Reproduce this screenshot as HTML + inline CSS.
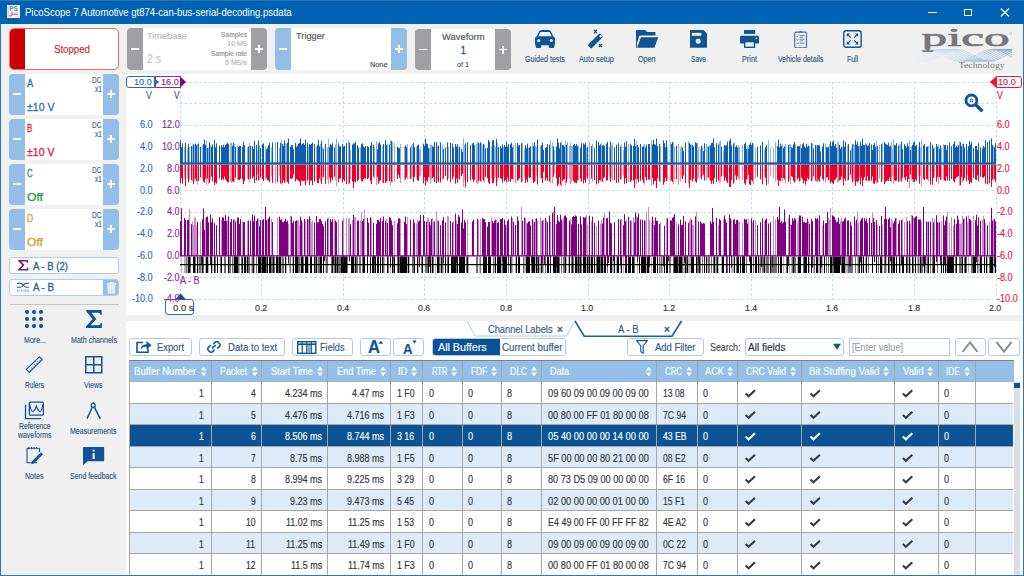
<!DOCTYPE html>
<html><head><meta charset="utf-8"><style>
html,body{margin:0;padding:0;}
body{width:1024px;height:576px;overflow:hidden;position:relative;background:#f0f0f0;font-family:"Liberation Sans",sans-serif;}
.a{position:absolute;box-sizing:border-box;}
.t{position:absolute;white-space:nowrap;line-height:1;-webkit-text-stroke:0.15px currentColor;}
svg{position:absolute;left:0;top:0;}
</style></head><body>
<div class="a" style="left:0px;top:0px;width:1024px;height:24px;background:#0063b1"></div>
<div class="a" style="left:0px;top:0px;width:1024px;height:1px;background:#2a74bd"></div>
<svg style="left:7px;top:5px" width="13" height="13" viewBox="0 0 13 13">
<rect x="0" y="0" width="13" height="13" fill="#f4f4f4"/>
<rect x="0.8" y="0.5" width="0.8" height="12" fill="#bbb"/>
<text x="2.2" y="6.2" font-family="Liberation Sans" font-size="6.6" font-weight="bold" fill="#4d8fd0">PS</text>
<path d="M2.5 10.5 Q4 12 5 10 L5 6.8 M5 9.2 L11 9.2" stroke="#e43a5a" stroke-width="1" fill="none"/>
</svg>
<div class="t" style="left:24.50px;top:6.79px;font-size:10.53px;color:#ffffff;font-weight:normal;transform:scaleX(0.9086);transform-origin:0 0;-webkit-text-stroke:0;">PicoScope 7 Automotive gt874-can-bus-serial-decoding.psdata</div>
<div class="a" style="left:928px;top:12px;width:9px;height:1px;background:#fff"></div>
<div class="a" style="left:964px;top:8.5px;width:8px;height:7.5px;border:1px solid #fff"></div>
<svg style="left:1000px;top:8px" width="10" height="9" viewBox="0 0 10 9"><path d="M0.8 0.5 L9 8.5 M9 0.5 L0.8 8.5" stroke="#fff" stroke-width="1.1"/></svg>
<div class="a" style="left:9px;top:28px;width:110px;height:42px;background:#fff;border:1px solid #e07070;border-radius:5px;overflow:hidden"><div class="a" style="left:-1px;top:-1px;width:16px;height:42px;background:#cc0000"></div></div>
<div class="t" style="left:54.00px;top:43.59px;font-size:11.114999999999998px;color:#c8262c;font-weight:normal;transform:scaleX(0.8693);transform-origin:0 0;">Stopped</div>
<div class="a" style="left:127px;top:28px;width:140px;height:42px;background:#fff;border-radius:4px;overflow:hidden"><div class="a" style="left:0;top:0;width:16px;height:100%;background:#a0a0a3"></div><div class="a" style="right:0;top:0;width:16px;height:100%;background:#a0a0a3"></div></div>
<div class="a" style="left:131.0px;top:48.4px;width:8.0px;height:1.3000000000000043px;background:#fff"></div>
<div class="a" style="left:255.0px;top:48.4px;width:8.0px;height:1.3000000000000043px;background:#fff"></div>
<div class="a" style="left:258.4px;top:45.0px;width:1.2000000000000455px;height:8.0px;background:#fff"></div>
<div class="t" style="left:147.40px;top:32.37px;font-size:8.892px;color:#b9b9b9;font-weight:normal;transform:scaleX(1.0332);transform-origin:0 0;">Timebase</div>
<div class="t" style="left:147.40px;top:52.70px;font-size:12.051px;color:#c4c4c4;font-weight:normal;transform:scaleX(0.8709);transform-origin:0 0;">2 s</div>
<div class="t" style="left:221.30px;top:31.36px;font-size:7.254px;color:#8f8f8f;font-weight:normal;transform:scaleX(0.9212);transform-origin:0 0;">Samples</div>
<div class="t" style="left:227.30px;top:40.76px;font-size:6.903px;color:#b5b5b5;font-weight:normal;">10 MS</div>
<div class="t" style="left:211.30px;top:50.36px;font-size:7.254px;color:#8f8f8f;font-weight:normal;transform:scaleX(0.9204);transform-origin:0 0;">Sample rate</div>
<div class="t" style="left:225.30px;top:59.86px;font-size:6.903px;color:#b5b5b5;font-weight:normal;transform:scaleX(1.0241);transform-origin:0 0;">5 MS/s</div>
<div class="a" style="left:275px;top:28px;width:132px;height:42px;background:#fff;border-radius:4px;overflow:hidden"><div class="a" style="left:0;top:0;width:16px;height:100%;background:#92bee8"></div><div class="a" style="right:0;top:0;width:16px;height:100%;background:#92bee8"></div></div>
<div class="a" style="left:279.0px;top:48.4px;width:8.0px;height:1.3000000000000043px;background:#fff"></div>
<div class="a" style="left:395.0px;top:48.4px;width:8.0px;height:1.3000000000000043px;background:#fff"></div>
<div class="a" style="left:398.4px;top:45.0px;width:1.2000000000000455px;height:8.0px;background:#fff"></div>
<div class="t" style="left:295.80px;top:31.77px;font-size:8.892px;color:#555555;font-weight:normal;transform:scaleX(1.0418);transform-origin:0 0;">Trigger</div>
<div class="t" style="left:369.50px;top:60.77px;font-size:8.073px;color:#3d4a5c;font-weight:normal;transform:scaleX(0.9067);transform-origin:0 0;">None</div>
<div class="a" style="left:415px;top:29px;width:96px;height:41px;background:#fff;border-radius:4px;overflow:hidden"><div class="a" style="left:0;top:0;width:16px;height:100%;background:#a0a0a3"></div><div class="a" style="right:0;top:0;width:16px;height:100%;background:#a0a0a3"></div></div>
<div class="a" style="left:419.0px;top:48.9px;width:8.0px;height:1.3000000000000043px;background:#fff"></div>
<div class="a" style="left:499.0px;top:48.9px;width:8.0px;height:1.3000000000000043px;background:#fff"></div>
<div class="a" style="left:502.4px;top:45.5px;width:1.2000000000000455px;height:8.0px;background:#fff"></div>
<div class="t" style="left:442.05px;top:32.97px;font-size:8.774999999999999px;color:#505050;font-weight:normal;transform:scaleX(1.0717);transform-origin:0 0;">Waveform</div>
<div class="t" style="left:461.00px;top:45.49px;font-size:11.232px;color:#2a5a90;font-weight:normal;transform:scaleX(0.7364);transform-origin:0 0;-webkit-text-stroke:0.5px currentColor;">1</div>
<div class="t" style="left:457.30px;top:60.76px;font-size:7.3709999999999996px;color:#2a5a90;font-weight:normal;transform:scaleX(0.9760);transform-origin:0 0;">of 1</div>
<svg style="left:535px;top:29.5px" width="20" height="18" viewBox="0 0 20 18" fill="#0f5496">
<path d="M4 1.6 Q4.7 0 6.5 0 H13.5 Q15.3 0 16 1.6 L18.2 6.2 Q20 7 20 9 V13.8 Q20 15.3 18.5 15.3 H1.5 Q0 15.3 0 13.8 V9 Q0 7 1.8 6.2 Z"/>
<path d="M5 2.6 Q5.3 2.1 6.2 2.1 H13.8 Q14.7 2.1 15 2.6 L16.6 6.2 H3.4 Z" fill="#f0f0f0"/>
<circle cx="3.7" cy="10.5" r="1.6" fill="#f0f0f0"/><circle cx="16.3" cy="10.5" r="1.6" fill="#f0f0f0"/>
<rect x="0.6" y="13" width="5.6" height="5" rx="1.6"/><rect x="13.8" y="13" width="5.6" height="5" rx="1.6"/>
</svg>
<div class="t" style="left:525.00px;top:54.77px;font-size:8.892px;color:#2f5a86;font-weight:normal;transform:scaleX(0.8012);transform-origin:0 0;">Guided tests</div>
<svg style="left:586px;top:28px" width="20" height="21" viewBox="0 0 20 21" fill="#0f5496">
<path d="M2.6 16.2 L12.6 6.2 Q13.6 5.2 14.6 6.2 L16.2 7.8 Q17.2 8.8 16.2 9.8 L6.2 19.8 Q5.2 20.8 4.2 19.8 L2.6 18.2 Q1.6 17.2 2.6 16.2 Z"/>
<rect x="13.6" y="7.2" width="2.2" height="2.2" transform="rotate(45 14.7 8.3)" fill="#f0f0f0"/>
<path d="M8 2 L11 5 M11 2 L8 5 M13 16 L16 19 M16 16 L13 19" stroke="#0f5496" stroke-width="1.1" fill="none"/>
</svg>
<div class="t" style="left:578.50px;top:54.77px;font-size:8.892px;color:#2f5a86;font-weight:normal;transform:scaleX(0.8232);transform-origin:0 0;">Auto setup</div>
<svg style="left:636px;top:29.75px" width="22.5" height="18" viewBox="0 0 22.5 18" fill="#0f5496">
<path d="M0 0.8 Q0 0 0.8 0 H9.3 L11 2 H18.7 Q19.5 2 19.5 2.8 V5.4 H4.6 Q3.4 5.4 3 6.6 L0.9 13.6 V17.75 H0 Z"/>
<path d="M4.9 7.2 H22.3 L18.4 17.75 H1.2 Z"/>
</svg>
<div class="t" style="left:638.45px;top:54.77px;font-size:8.892px;color:#2f5a86;font-weight:normal;transform:scaleX(0.8045);transform-origin:0 0;">Open</div>
<svg style="left:689.8px;top:29.75px" width="17.2" height="17.8" viewBox="0 0 17.2 17.8" fill="#0f5496">
<path d="M0 0 H13.6 L17.2 3.6 V17.8 H0 Z"/>
<rect x="1.9" y="2.85" width="9.5" height="2.9" fill="#f0f0f0"/>
<circle cx="8.2" cy="11.3" r="2.5" fill="#f0f0f0"/>
</svg>
<div class="t" style="left:691.00px;top:54.77px;font-size:8.892px;color:#2f5a86;font-weight:normal;transform:scaleX(0.7401);transform-origin:0 0;">Save</div>
<svg style="left:740px;top:29.75px" width="19" height="18" viewBox="0 0 19 18" fill="#0f5496">
<rect x="4" y="0" width="11.2" height="3.9"/>
<path d="M1.2 5.8 H17.8 Q19 5.8 19 7 V12.4 Q19 13.6 17.8 13.6 H1.2 Q0 13.6 0 12.4 V7 Q0 5.8 1.2 5.8 Z"/>
<rect x="4" y="11" width="11.2" height="7" rx="0.8"/>
<rect x="5.4" y="12.3" width="8.4" height="4.3" fill="#f0f0f0"/>
<circle cx="16.4" cy="8.3" r="0.9" fill="#f0f0f0"/>
</svg>
<div class="t" style="left:742.00px;top:54.77px;font-size:8.892px;color:#2f5a86;font-weight:normal;transform:scaleX(0.8204);transform-origin:0 0;">Print</div>
<svg style="left:794px;top:29.5px" width="14" height="18.5" viewBox="0 0 14 18.5">
<rect x="0.7" y="2.2" width="11.8" height="15.6" rx="1.2" fill="none" stroke="#3f78b0" stroke-width="1.2"/>
<path d="M4 2.8 V1.6 H5.6 Q6.5 0 7.4 1.6 H9 V2.8 Z" fill="#3f78b0"/>
<path d="M2.6 6 L3.4 6.9 L4.6 5.2 M2.6 9.6 L3.4 10.5 L4.6 8.8 M2.6 13.2 L3.4 14.1 L4.6 12.4" stroke="#3f78b0" stroke-width="0.8" fill="none"/>
<path d="M5.6 5.6 H10.6 M5.6 7.2 H9 M5.6 9.2 H10.6 M5.6 10.8 H9 M5.6 13.2 H10.6" stroke="#3f78b0" stroke-width="0.8"/>
</svg>
<div class="t" style="left:777.95px;top:54.77px;font-size:8.892px;color:#2f5a86;font-weight:normal;transform:scaleX(0.8004);transform-origin:0 0;">Vehicle details</div>
<svg style="left:842.7px;top:29.75px" width="19" height="18" viewBox="0 0 19 18">
<rect x="0.75" y="0.75" width="17.4" height="16.5" rx="2.2" fill="none" stroke="#0f5496" stroke-width="1.4"/>
<g stroke="#0f5496" stroke-width="1.2" fill="#0f5496">

</g>
<g fill="#0f5496">
<path d="M3.7 3.6 H7 L3.7 6.9 Z"/><path d="M15.2 3.6 V6.9 L11.9 3.6 Z"/>
<path d="M3.7 14.4 V11.1 L7 14.4 Z"/><path d="M15.2 14.4 H11.9 L15.2 11.1 Z"/>
</g>
<path d="M4.5 4.4 L7.7 7.6 M14.4 4.4 L11.2 7.6 M4.5 13.6 L7.7 10.4 M14.4 13.6 L11.2 10.4" stroke="#0f5496" stroke-width="1.3"/>
</svg>
<div class="t" style="left:846.50px;top:54.77px;font-size:8.892px;color:#2f5a86;font-weight:normal;transform:scaleX(0.7677);transform-origin:0 0;">Full</div>
<svg style="left:912px;top:26px" width="104" height="46" viewBox="0 0 104 46">
<defs><linearGradient id="wg" x1="0" x2="1" y1="0" y2="0"><stop offset="0" stop-color="#e6f0f8"/><stop offset="0.45" stop-color="#8cc0e6"/><stop offset="1" stop-color="#3d7fb8"/></linearGradient></defs>
<text x="9.6" y="19.8" font-family="Liberation Serif" font-size="25.5" fill="#77777a" stroke="#77777a" stroke-width="0.7" textLength="88" lengthAdjust="spacingAndGlyphs">pico</text>
<circle cx="98.6" cy="7.4" r="1.1" fill="none" stroke="#999" stroke-width="0.4"/>
<polyline points="5.0,34.2 7.4,34.8 9.8,35.2 12.1,35.3 14.5,35.1 16.9,34.6 19.2,33.8 21.6,32.8 24.0,31.6 26.4,30.3 28.8,28.9 31.1,27.6 33.5,26.4 35.9,25.3 38.2,24.4 40.6,23.7 43.0,23.4 45.4,23.3 47.8,23.6 50.1,24.1 52.5,24.9 54.9,25.9 57.2,27.1 59.6,28.5 62.0,29.8 64.4,31.1 66.8,32.4 69.1,33.4 71.5,34.3 73.9,34.9 76.2,35.2 78.6,35.3 81.0,35.0 83.4,34.4 85.8,33.6 88.1,32.5 90.5,31.3 92.9,30.0 95.2,28.6 97.6,27.3 100.0,26.1" fill="none" stroke="url(#wg)" stroke-width="0.4"/><polyline points="5.0,35.1 7.4,35.3 9.8,35.2 12.1,34.8 14.5,34.1 16.9,33.2 19.2,32.1 21.6,30.8 24.0,29.5 26.4,28.1 28.8,26.8 31.1,25.7 33.5,24.7 35.9,24.0 38.2,23.5 40.6,23.3 43.0,23.4 45.4,23.9 47.8,24.6 50.1,25.5 52.5,26.6 54.9,27.9 57.2,29.3 59.6,30.6 62.0,31.9 64.4,33.0 66.8,34.0 69.1,34.7 71.5,35.2 73.9,35.3 76.2,35.1 78.6,34.7 81.0,34.0 83.4,33.0 85.8,31.8 88.1,30.5 90.5,29.2 92.9,27.9 95.2,26.6 97.6,25.5 100.0,24.5" fill="none" stroke="url(#wg)" stroke-width="0.4"/><polyline points="5.0,35.3 7.4,35.0 9.8,34.4 12.1,33.6 14.5,32.6 16.9,31.4 19.2,30.0 21.6,28.7 24.0,27.4 26.4,26.1 28.8,25.1 31.1,24.2 33.5,23.6 35.9,23.3 38.2,23.3 40.6,23.6 43.0,24.2 45.4,25.1 47.8,26.2 50.1,27.4 52.5,28.7 54.9,30.1 57.2,31.4 59.6,32.6 62.0,33.6 64.4,34.4 66.8,35.0 69.1,35.3 71.5,35.2 73.9,34.9 76.2,34.3 78.6,33.4 81.0,32.3 83.4,31.1 85.8,29.8 88.1,28.4 90.5,27.1 92.9,25.9 95.2,24.9 97.6,24.1 100.0,23.6" fill="none" stroke="url(#wg)" stroke-width="0.4"/><polyline points="5.0,34.7 7.4,34.0 9.8,33.0 12.1,31.9 14.5,30.6 16.9,29.2 19.2,27.9 21.6,26.6 24.0,25.5 26.4,24.5 28.8,23.8 31.1,23.4 33.5,23.3 35.9,23.5 38.2,24.0 40.6,24.7 43.0,25.7 45.4,26.9 47.8,28.2 50.1,29.5 52.5,30.8 54.9,32.1 57.2,33.2 59.6,34.1 62.0,34.8 64.4,35.2 66.8,35.3 69.1,35.1 71.5,34.6 73.9,33.8 76.2,32.8 78.6,31.6 81.0,30.3 83.4,29.0 85.8,27.6 88.1,26.4 90.5,25.3 92.9,24.4 95.2,23.7 97.6,23.4 100.0,23.3" fill="none" stroke="url(#wg)" stroke-width="0.4"/><polyline points="5.0,33.4 7.4,32.4 9.8,31.1 12.1,29.8 14.5,28.4 16.9,27.1 19.2,25.9 21.6,24.9 24.0,24.1 26.4,23.6 28.8,23.3 31.1,23.4 33.5,23.7 35.9,24.4 38.2,25.3 40.6,26.4 43.0,27.6 45.4,29.0 47.8,30.3 50.1,31.6 52.5,32.8 54.9,33.8 57.2,34.6 59.6,35.1 62.0,35.3 64.4,35.2 66.8,34.8 69.1,34.1 71.5,33.2 73.9,32.1 76.2,30.8 78.6,29.5 81.0,28.2 83.4,26.9 85.8,25.7 88.1,24.7 90.5,24.0 92.9,23.5 95.2,23.3 97.6,23.4 100.0,23.8" fill="none" stroke="url(#wg)" stroke-width="0.4"/><polyline points="5.0,31.6 7.4,30.3 9.8,29.0 12.1,27.7 14.5,26.4 16.9,25.3 19.2,24.4 21.6,23.7 24.0,23.4 26.4,23.3 28.8,23.6 31.1,24.1 33.5,24.9 35.9,25.9 38.2,27.1 40.6,28.4 43.0,29.8 45.4,31.1 47.8,32.3 50.1,33.4 52.5,34.3 54.9,34.9 57.2,35.2 59.6,35.3 62.0,35.0 64.4,34.4 66.8,33.6 69.1,32.6 71.5,31.4 73.9,30.1 76.2,28.7 78.6,27.4 81.0,26.2 83.4,25.1 85.8,24.2 88.1,23.6 90.5,23.3 92.9,23.3 95.2,23.6 97.6,24.2 100.0,25.1" fill="none" stroke="url(#wg)" stroke-width="0.4"/><polyline points="5.0,29.5 7.4,28.2 9.8,26.9 12.1,25.7 14.5,24.7 16.9,24.0 19.2,23.5 21.6,23.3 24.0,23.4 26.4,23.8 28.8,24.5 31.1,25.5 33.5,26.6 35.9,27.9 38.2,29.2 40.6,30.6 43.0,31.8 45.4,33.0 47.8,34.0 50.1,34.7 52.5,35.1 54.9,35.3 57.2,35.2 59.6,34.7 62.0,34.0 64.4,33.0 66.8,31.9 69.1,30.6 71.5,29.3 73.9,27.9 76.2,26.6 78.6,25.5 81.0,24.6 83.4,23.9 85.8,23.4 88.1,23.3 90.5,23.5 92.9,24.0 95.2,24.7 97.6,25.7 100.0,26.8" fill="none" stroke="url(#wg)" stroke-width="0.4"/><polyline points="5.0,27.4 7.4,26.2 9.8,25.1 12.1,24.3 14.5,23.7 16.9,23.3 19.2,23.3 21.6,23.6 24.0,24.2 26.4,25.1 28.8,26.1 31.1,27.3 33.5,28.7 35.9,30.0 38.2,31.3 40.6,32.5 43.0,33.6 45.4,34.4 47.8,35.0 50.1,35.3 52.5,35.2 54.9,34.9 57.2,34.3 59.6,33.4 62.0,32.4 64.4,31.1 66.8,29.8 69.1,28.5 71.5,27.1 73.9,25.9 76.2,24.9 78.6,24.1 81.0,23.6 83.4,23.3 85.8,23.4 88.1,23.7 90.5,24.4 92.9,25.3 95.2,26.4 97.6,27.6 100.0,28.9" fill="none" stroke="url(#wg)" stroke-width="0.4"/><polyline points="5.0,25.5 7.4,24.6 9.8,23.9 12.1,23.4 14.5,23.3 16.9,23.5 19.2,23.9 21.6,24.7 24.0,25.7 26.4,26.8 28.8,28.1 31.1,29.5 33.5,30.8 35.9,32.1 38.2,33.2 40.6,34.1 43.0,34.8 45.4,35.2 47.8,35.3 50.1,35.1 52.5,34.6 54.9,33.8 57.2,32.8 59.6,31.7 62.0,30.4 64.4,29.0 66.8,27.7 69.1,26.4 71.5,25.3 73.9,24.4 76.2,23.8 78.6,23.4 81.0,23.3 83.4,23.5 85.8,24.1 88.1,24.9 90.5,25.9 92.9,27.1 95.2,28.4 97.6,29.7 100.0,31.1" fill="none" stroke="url(#wg)" stroke-width="0.4"/>
<rect x="14.6" y="19" width="2.6" height="6.6" fill="#77777a"/><rect x="10.6" y="24.8" width="10.4" height="1.1" fill="#77777a"/>
<text x="46.7" y="42.1" font-family="Liberation Serif" font-size="8.2" fill="#7c7c7c" textLength="46" lengthAdjust="spacingAndGlyphs">Technology</text>
</svg>
<div class="a" style="left:9px;top:73.5px;width:110px;height:41.0px;background:#fff;border-radius:4px;overflow:hidden"><div class="a" style="left:0;top:0;width:16px;height:100%;background:#92bee8"></div><div class="a" style="right:0;top:0;width:16px;height:100%;background:#92bee8"></div></div>
<div class="a" style="left:13.0px;top:93.4px;width:8.0px;height:1.2999999999999972px;background:#fff"></div>
<div class="a" style="left:107.0px;top:93.4px;width:8.0px;height:1.2999999999999972px;background:#fff"></div>
<div class="a" style="left:110.3px;top:90.0px;width:1.4000000000000057px;height:8.0px;background:#fff"></div>
<div class="t" style="left:26.60px;top:77.69px;font-size:10.53px;color:#2a6cb3;font-weight:normal;transform:scaleX(0.8827);transform-origin:0 0;-webkit-text-stroke:0.3px currentColor;">A</div>
<div class="t" style="left:92.30px;top:76.87px;font-size:8.19px;color:#3d5f85;font-weight:normal;transform:scaleX(0.7862);transform-origin:0 0;">DC</div>
<div class="t" style="left:94.80px;top:85.47px;font-size:8.424px;color:#3d5f85;font-weight:normal;transform:scaleX(0.7643);transform-origin:0 0;">x1</div>
<div class="t" style="left:27.40px;top:102.09px;font-size:11.232px;color:#2a6cb3;font-weight:normal;transform:scaleX(0.9395);transform-origin:0 0;-webkit-text-stroke:0.3px currentColor;">±10 V</div>
<div class="a" style="left:9px;top:118.5px;width:110px;height:41.0px;background:#fff;border-radius:4px;overflow:hidden"><div class="a" style="left:0;top:0;width:16px;height:100%;background:#92bee8"></div><div class="a" style="right:0;top:0;width:16px;height:100%;background:#92bee8"></div></div>
<div class="a" style="left:13.0px;top:138.4px;width:8.0px;height:1.299999999999983px;background:#fff"></div>
<div class="a" style="left:107.0px;top:138.4px;width:8.0px;height:1.299999999999983px;background:#fff"></div>
<div class="a" style="left:110.3px;top:135.0px;width:1.4000000000000057px;height:8.0px;background:#fff"></div>
<div class="t" style="left:26.60px;top:122.69px;font-size:10.53px;color:#e8163c;font-weight:normal;transform:scaleX(0.7403);transform-origin:0 0;-webkit-text-stroke:0.3px currentColor;">B</div>
<div class="t" style="left:92.30px;top:121.87px;font-size:8.19px;color:#3d5f85;font-weight:normal;transform:scaleX(0.7862);transform-origin:0 0;">DC</div>
<div class="t" style="left:94.80px;top:130.47px;font-size:8.424px;color:#3d5f85;font-weight:normal;transform:scaleX(0.7643);transform-origin:0 0;">x1</div>
<div class="t" style="left:27.40px;top:147.09px;font-size:11.232px;color:#e8163c;font-weight:normal;transform:scaleX(0.9395);transform-origin:0 0;-webkit-text-stroke:0.3px currentColor;">±10 V</div>
<div class="a" style="left:9px;top:163.5px;width:110px;height:41.0px;background:#fff;border-radius:4px;overflow:hidden"><div class="a" style="left:0;top:0;width:16px;height:100%;background:#92bee8"></div><div class="a" style="right:0;top:0;width:16px;height:100%;background:#92bee8"></div></div>
<div class="a" style="left:13.0px;top:183.4px;width:8.0px;height:1.299999999999983px;background:#fff"></div>
<div class="a" style="left:107.0px;top:183.4px;width:8.0px;height:1.299999999999983px;background:#fff"></div>
<div class="a" style="left:110.3px;top:180.0px;width:1.4000000000000057px;height:8.0px;background:#fff"></div>
<div class="t" style="left:26.60px;top:167.69px;font-size:10.53px;color:#2c9a40;font-weight:normal;transform:scaleX(0.7495);transform-origin:0 0;-webkit-text-stroke:0.3px currentColor;">C</div>
<div class="t" style="left:92.30px;top:166.87px;font-size:8.19px;color:#3d5f85;font-weight:normal;transform:scaleX(0.7862);transform-origin:0 0;">DC</div>
<div class="t" style="left:94.80px;top:175.47px;font-size:8.424px;color:#3d5f85;font-weight:normal;transform:scaleX(0.7643);transform-origin:0 0;">x1</div>
<div class="t" style="left:27.40px;top:192.39px;font-size:10.881px;color:#2c9a40;font-weight:normal;transform:scaleX(1.1179);transform-origin:0 0;-webkit-text-stroke:0.3px currentColor;">Off</div>
<div class="a" style="left:9px;top:208.5px;width:110px;height:41.0px;background:#fff;border-radius:4px;overflow:hidden"><div class="a" style="left:0;top:0;width:16px;height:100%;background:#92bee8"></div><div class="a" style="right:0;top:0;width:16px;height:100%;background:#92bee8"></div></div>
<div class="a" style="left:13.0px;top:228.4px;width:8.0px;height:1.299999999999983px;background:#fff"></div>
<div class="a" style="left:107.0px;top:228.4px;width:8.0px;height:1.299999999999983px;background:#fff"></div>
<div class="a" style="left:110.3px;top:225.0px;width:1.4000000000000057px;height:8.0px;background:#fff"></div>
<div class="t" style="left:26.60px;top:212.69px;font-size:10.53px;color:#d8a030;font-weight:normal;transform:scaleX(0.8153);transform-origin:0 0;-webkit-text-stroke:0.3px currentColor;">D</div>
<div class="t" style="left:92.30px;top:211.87px;font-size:8.19px;color:#3d5f85;font-weight:normal;transform:scaleX(0.7862);transform-origin:0 0;">DC</div>
<div class="t" style="left:94.80px;top:220.47px;font-size:8.424px;color:#3d5f85;font-weight:normal;transform:scaleX(0.7643);transform-origin:0 0;">x1</div>
<div class="t" style="left:27.40px;top:237.39px;font-size:10.881px;color:#d8a030;font-weight:normal;transform:scaleX(1.1179);transform-origin:0 0;-webkit-text-stroke:0.3px currentColor;">Off</div>
<div class="a" style="left:9px;top:257px;width:110px;height:17px;background:#fff;border:1px solid #aacdee;border-radius:3px"></div>
<svg style="left:18px;top:260.4px" width="10.5" height="10.5" viewBox="0 0 10.5 10.5"><path d="M0 0 H10 V3 H9.2 Q8.9 1.6 7.6 1.6 H3.2 L6.6 5.1 L2.8 8.9 H7.8 Q9 8.9 9.3 7.4 H10.3 V10.4 H0 V9.6 L4.2 5.2 L0 0.8 Z" fill="#7a1a8a"/></svg>
<div class="t" style="left:33.30px;top:261.78px;font-size:10.296px;color:#2b5d91;font-weight:normal;transform:scaleX(0.9269);transform-origin:0 0;-webkit-text-stroke:0.3px currentColor;">A - B (2)</div>
<div class="a" style="left:9px;top:278.5px;width:110px;height:17px;background:#fff;border:1px solid #aacdee;border-radius:3px;overflow:hidden"><div class="a" style="right:0;top:0;width:15.5px;height:100%;background:#92bee8"></div></div>
<svg style="left:106px;top:281.5px" width="11" height="12" viewBox="0 0 11 12" fill="#fff">
<rect x="0.5" y="1.2" width="9.8" height="1.4" rx="0.5"/><rect x="3.8" y="0" width="3.2" height="1.5"/>
<path d="M1.4 3.3 H9.4 L8.7 11.6 H2.1 Z"/>
<path d="M3.6 4.4 V10.6 M5.4 4.4 V10.6 M7.2 4.4 V10.6" stroke="#92bee8" stroke-width="0.6"/></svg>
<svg style="left:16.5px;top:282px" width="12.5" height="10" viewBox="0 0 12.5 10">
<path d="M0 1.4 H3.2 Q5 1.4 6.2 3.3 Q7.4 5.2 9.2 5.2 H12.2 M0 5.2 H3.2 Q5 5.2 6.2 3.3 Q7.4 1.4 9.2 1.4 H12.2" stroke="#2b5d91" stroke-width="1.1" fill="none"/>
<path d="M0.6 7 V10 M2 7.8 V10 M4.6 7 V10 M7 7.8 V10 M8.4 7 V10 M10 7.8 V10 M11.4 7 V10" stroke="#5f8ab5" stroke-width="0.6"/>
</svg>
<div class="t" style="left:33.30px;top:282.78px;font-size:10.296px;color:#2b5d91;font-weight:normal;transform:scaleX(0.9410);transform-origin:0 0;-webkit-text-stroke:0.3px currentColor;">A - B</div>
<div class="a" style="left:10px;top:304px;width:109px;height:1px;background:#c6c6c6"></div>
<svg style="left:25.3px;top:310px" width="18" height="18" viewBox="0 0 18 18" fill="#0f5496"><circle cx="2.0" cy="2.0" r="2.05"/><circle cx="2.0" cy="9.0" r="2.05"/><circle cx="2.0" cy="16.0" r="2.05"/><circle cx="9.0" cy="2.0" r="2.05"/><circle cx="9.0" cy="9.0" r="2.05"/><circle cx="9.0" cy="16.0" r="2.05"/><circle cx="16.0" cy="2.0" r="2.05"/><circle cx="16.0" cy="9.0" r="2.05"/><circle cx="16.0" cy="16.0" r="2.05"/></svg>
<div class="t" style="left:23.50px;top:335.57px;font-size:8.892px;color:#2f5a86;font-weight:normal;transform:scaleX(0.7951);transform-origin:0 0;">More...</div>
<svg style="left:85.8px;top:310px" width="16" height="18" viewBox="0 0 16 18"><path d="M0.3 0 H15.6 V5 H14.6 Q14.2 2.7 12 2.7 H5.2 L10.4 8.9 L4.6 15.3 H12.3 Q14.4 15.3 14.9 12.9 H15.9 V18 H0 V16.6 L6.6 8.9 L0.3 1.5 Z" fill="#0f5496"/></svg>
<div class="t" style="left:70.75px;top:335.57px;font-size:8.892px;color:#2f5a86;font-weight:normal;transform:scaleX(0.7954);transform-origin:0 0;">Math channels</div>
<svg style="left:25px;top:356px" width="19" height="18" viewBox="0 0 19 18">
<path d="M1.3 13.4 L14.4 0.8 L17.3 3.4 L4.2 16.3 Z" fill="none" stroke="#0f5496" stroke-width="1.15" stroke-linejoin="round"/>
<path d="M6.20 14.82 L5.07 13.69 M7.80 13.25 L5.96 11.41 M9.40 11.67 L8.27 10.54 M11.00 10.10 L9.16 8.26 M12.60 8.53 L11.47 7.39 M14.20 6.95 L12.36 5.11 M15.80 5.38 L14.67 4.24 " stroke="#0f5496" stroke-width="0.8"/></svg>
<div class="t" style="left:25.00px;top:380.87px;font-size:8.892px;color:#2f5a86;font-weight:normal;transform:scaleX(0.7394);transform-origin:0 0;">Rulers</div>
<svg style="left:85px;top:356px" width="17.5" height="17.5" viewBox="0 0 17.5 17.5" fill="none" stroke="#0f5496" stroke-width="1.5">
<rect x="0.75" y="0.75" width="16" height="16"/><path d="M8.75 0.75 V16.75 M0.75 8.75 H16.75"/></svg>
<div class="t" style="left:84.25px;top:380.87px;font-size:8.892px;color:#2f5a86;font-weight:normal;transform:scaleX(0.7852);transform-origin:0 0;">Views</div>
<svg style="left:24px;top:400px" width="21" height="20" viewBox="0 0 21 20" fill="none" stroke="#0f5496" stroke-width="1.3">
<rect x="5.35" y="2.15" width="14" height="13" rx="1"/><path d="M1.5 4.8 V18.6 H17"/>
<path d="M5.8 4.5 Q7 11.5 8.6 11.5 Q10.5 11.5 12.4 6 Q14.3 11.5 16 11.5 Q17.7 11.5 18.8 4.5" stroke-width="1.1"/></svg>
<div class="t" style="left:18.75px;top:422.37px;font-size:8.892px;color:#2f5a86;font-weight:normal;transform:scaleX(0.7678);transform-origin:0 0;">Reference</div>
<div class="t" style="left:17.75px;top:431.47px;font-size:8.892px;color:#2f5a86;font-weight:normal;transform:scaleX(0.7793);transform-origin:0 0;">waveforms</div>
<svg style="left:86px;top:401.5px" width="15.5" height="18" viewBox="0 0 15.5 18" fill="none" stroke="#0f5496">
<circle cx="7.2" cy="3.4" r="2" stroke-width="1.3"/><path d="M7.2 0 V1.4" stroke-width="1.2"/>
<path d="M6.2 5.3 L1 16.8 M8.4 5.3 L14.3 16.8" stroke-width="1.5"/></svg>
<div class="t" style="left:70.25px;top:426.57px;font-size:8.892px;color:#2f5a86;font-weight:normal;transform:scaleX(0.7907);transform-origin:0 0;">Measurements</div>
<svg style="left:25.8px;top:447px" width="17.5" height="17.5" viewBox="0 0 17.5 17.5">
<path d="M11 15.8 H1 V1.2 H13.5 V5" fill="none" stroke="#0f5496" stroke-width="1.1"/>
<path d="M3 0 V2.2 M5.5 0 V2.2 M8 0 V2.2 M10.5 0 V2.2" stroke="#0f5496" stroke-width="1"/>
<path d="M15 5.3 L17 7.3 L8 16.3 L5.3 17.2 L6 14.3 Z" fill="#0f5496"/></svg>
<div class="t" style="left:25.05px;top:472.37px;font-size:8.892px;color:#2f5a86;font-weight:normal;transform:scaleX(0.7964);transform-origin:0 0;">Notes</div>
<svg style="left:83px;top:447.2px" width="21.5" height="18" viewBox="0 0 21.5 18">
<path d="M0.8 0 H20.4 Q21.2 0 21.2 0.8 V13.5 Q21.2 14.3 20.4 14.3 H4.5 L1 17.6 Q0 18 0 17 V0.8 Q0 0 0.8 0 Z" fill="#0f5496"/>
<rect x="9.7" y="6" width="1.9" height="6" fill="#fff"/><rect x="9.7" y="2.6" width="1.9" height="1.9" fill="#fff"/></svg>
<div class="t" style="left:70.25px;top:472.37px;font-size:8.892px;color:#2f5a86;font-weight:normal;transform:scaleX(0.7838);transform-origin:0 0;">Send feedback</div>
<div class="a" style="left:126px;top:74px;width:897px;height:241px;background:#fff"></div>
<svg style="left:0;top:0" width="1024" height="576"><g stroke="#b8dcec" stroke-width="1" stroke-dasharray="2.5 2.3" fill="none"><path d="M180 82.5 H996" /><path d="M180 103.5 H996" /><path d="M180 125.5 H996" /><path d="M180 147.5 H996" /><path d="M180 169.5 H996" /><path d="M180 190.5 H996" /><path d="M180 212.5 H996" /><path d="M180 234.5 H996" /><path d="M180 256.5 H996" /><path d="M180 277.5 H996" /><path d="M180 299.5 H996" /><path d="M180.5 82 V299.5" /><path d="M261.5 82 V299.5" /><path d="M343.5 82 V299.5" /><path d="M424.5 82 V299.5" /><path d="M506.5 82 V299.5" /><path d="M588.5 82 V299.5" /><path d="M669.5 82 V299.5" /><path d="M751.5 82 V299.5" /><path d="M832.5 82 V299.5" /><path d="M914.5 82 V299.5" /><path d="M996.5 82 V299.5" /></g></svg>
<svg style="left:0;top:0" width="1024" height="576"><path d="M184.5 147.4V163.5M187.5 148.4V163.5M189.5 146.7V163.5M192.5 145.4V163.5M194.5 144.8V163.5M197.5 143.6V163.5M202.5 145.2V163.5M206.5 140.7V163.5M208.5 147.3V163.5M210.5 144.4V163.5M230.5 143.2V163.5M231.5 142.7V163.5M234.5 144.2V163.5M237.5 144.5V163.5M247.5 147.7V163.5M249.5 142.4V163.5M257.5 150.3V163.5M259.5 145.4V163.5M265.5 145.6V163.5M271.5 148.0V163.5M275.5 142.3V163.5M279.5 148.0V163.5M281.5 140.0V163.5M285.5 143.2V163.5M286.5 143.9V163.5M308.5 146.7V163.5M316.5 146.6V163.5M320.5 143.8V163.5M322.5 146.9V163.5M327.5 147.5V163.5M328.5 138.7V163.5M335.5 144.5V163.5M336.5 138.5V163.5M348.5 140.1V163.5M350.5 149.8V163.5M360.5 147.6V163.5M374.5 148.0V163.5M376.5 141.1V163.5M382.5 146.2V163.5M387.5 143.6V163.5M390.5 140.0V163.5M392.5 141.9V163.5M394.5 143.1V163.5M400.5 144.2V163.5M404.5 146.2V163.5M407.5 144.2V163.5M411.5 145.5V163.5M412.5 144.2V163.5M416.5 146.5V163.5M419.5 149.2V163.5M420.5 149.1V163.5M429.5 147.6V163.5M430.5 144.6V163.5M431.5 144.6V163.5M437.5 146.4V163.5M442.5 144.5V163.5M448.5 147.0V163.5M458.5 148.5V163.5M463.5 138.5V163.5M464.5 145.0V163.5M476.5 143.8V163.5M477.5 141.7V163.5M479.5 143.3V163.5M481.5 143.4V163.5M482.5 145.3V163.5M484.5 144.5V163.5M491.5 146.3V163.5M494.5 145.2V163.5M495.5 146.9V163.5M497.5 142.4V163.5M503.5 147.2V163.5M513.5 145.0V163.5M515.5 143.2V163.5M522.5 142.7V163.5M524.5 149.5V163.5M528.5 147.9V163.5M532.5 143.0V163.5M535.5 145.8V163.5M536.5 146.6V163.5M540.5 145.8V163.5M550.5 140.0V163.5M552.5 142.8V163.5M554.5 149.9V163.5M561.5 141.2V163.5M565.5 141.0V163.5M567.5 142.2V163.5M569.5 145.9V163.5M570.5 143.0V163.5M571.5 145.8V163.5M572.5 146.1V163.5M578.5 144.7V163.5M586.5 148.0V163.5M589.5 141.3V163.5M592.5 143.9V163.5M601.5 143.1V163.5M609.5 147.7V163.5M611.5 145.2V163.5M612.5 143.1V163.5M621.5 144.7V163.5M623.5 149.8V163.5M628.5 144.1V163.5M636.5 140.4V163.5M644.5 143.9V163.5M651.5 140.0V163.5M660.5 146.3V163.5M667.5 146.8V163.5M670.5 141.7V163.5M673.5 142.5V163.5M674.5 147.1V163.5M678.5 143.6V163.5M680.5 148.4V163.5M681.5 145.5V163.5M688.5 141.0V163.5M691.5 144.5V163.5M697.5 142.1V163.5M698.5 147.4V163.5M700.5 148.7V163.5M702.5 146.8V163.5M706.5 144.0V163.5M707.5 146.3V163.5M709.5 145.1V163.5M719.5 141.6V163.5M720.5 140.7V163.5M723.5 150.5V163.5M734.5 142.0V163.5M738.5 145.2V163.5M739.5 147.1V163.5M742.5 144.8V163.5M747.5 145.6V163.5M753.5 143.7V163.5M755.5 147.9V163.5M764.5 149.4V163.5M768.5 139.8V163.5M770.5 148.9V163.5M773.5 148.1V163.5M775.5 142.4V163.5M782.5 143.9V163.5M785.5 144.1V163.5M789.5 143.9V163.5M790.5 143.9V163.5M795.5 144.5V163.5M800.5 143.9V163.5M809.5 146.3V163.5M812.5 143.5V163.5M816.5 145.2V163.5M825.5 143.4V163.5M829.5 143.7V163.5M837.5 142.8V163.5M838.5 141.7V163.5M842.5 146.8V163.5M847.5 145.4V163.5M851.5 148.3V163.5M853.5 144.0V163.5M854.5 144.8V163.5M859.5 145.6V163.5M865.5 143.3V163.5M876.5 140.8V163.5M879.5 144.6V163.5M882.5 142.5V163.5M891.5 141.6V163.5M892.5 148.5V163.5M893.5 138.5V163.5M899.5 144.3V163.5M900.5 144.2V163.5M909.5 140.6V163.5M911.5 146.1V163.5M918.5 147.1V163.5M920.5 148.2V163.5M921.5 139.5V163.5M928.5 146.0V163.5M934.5 147.0V163.5M938.5 144.2V163.5M941.5 148.1V163.5M943.5 144.1V163.5M959.5 141.4V163.5M962.5 143.8V163.5M967.5 150.2V163.5M993.5 145.1V163.5" stroke="#88b4de" stroke-width="1" fill="none"/><path d="M180.5 140.4V163.5M181.5 147.4V163.5M182.5 143.3V163.5M185.5 143.0V163.5M188.5 143.9V163.5M191.5 146.0V163.5M193.5 144.0V163.5M195.5 143.7V163.5M196.5 145.0V163.5M198.5 143.5V163.5M200.5 146.8V163.5M203.5 143.9V163.5M204.5 139.6V163.5M205.5 144.7V163.5M207.5 147.8V163.5M209.5 142.0V163.5M211.5 146.7V163.5M212.5 144.5V163.5M214.5 139.8V163.5M215.5 147.4V163.5M216.5 143.3V163.5M219.5 145.6V163.5M221.5 145.1V163.5M222.5 147.0V163.5M223.5 144.8V163.5M224.5 147.0V163.5M225.5 144.7V163.5M226.5 144.1V163.5M227.5 142.9V163.5M228.5 143.8V163.5M232.5 145.8V163.5M233.5 142.8V163.5M235.5 147.0V163.5M238.5 146.9V163.5M239.5 145.8V163.5M240.5 146.0V163.5M242.5 146.8V163.5M243.5 141.6V163.5M244.5 145.2V163.5M248.5 146.4V163.5M250.5 145.8V163.5M252.5 146.2V163.5M253.5 149.0V163.5M254.5 141.0V163.5M256.5 144.7V163.5M258.5 140.4V163.5M260.5 148.1V163.5M262.5 144.3V163.5M263.5 143.3V163.5M266.5 149.3V163.5M267.5 147.7V163.5M268.5 145.2V163.5M269.5 142.9V163.5M272.5 142.4V163.5M277.5 142.0V163.5M280.5 142.8V163.5M282.5 143.9V163.5M283.5 145.9V163.5M284.5 140.5V163.5M287.5 142.6V163.5M288.5 138.5V163.5M290.5 146.8V163.5M291.5 145.2V163.5M292.5 145.1V163.5M293.5 149.2V163.5M295.5 142.8V163.5M296.5 146.8V163.5M297.5 145.7V163.5M298.5 143.7V163.5M299.5 143.1V163.5M300.5 138.5V163.5M301.5 144.5V163.5M302.5 144.0V163.5M303.5 143.1V163.5M304.5 144.7V163.5M305.5 139.6V163.5M307.5 142.8V163.5M309.5 144.0V163.5M310.5 144.7V163.5M311.5 143.8V163.5M312.5 142.5V163.5M314.5 144.1V163.5M317.5 144.8V163.5M318.5 139.7V163.5M319.5 146.3V163.5M321.5 140.9V163.5M323.5 148.6V163.5M325.5 143.9V163.5M329.5 146.9V163.5M330.5 144.2V163.5M331.5 145.2V163.5M332.5 143.2V163.5M334.5 147.9V163.5M338.5 143.3V163.5M339.5 146.6V163.5M340.5 145.9V163.5M342.5 144.1V163.5M343.5 146.8V163.5M344.5 145.9V163.5M346.5 143.2V163.5M349.5 142.7V163.5M352.5 144.6V163.5M353.5 143.3V163.5M354.5 143.6V163.5M355.5 141.8V163.5M357.5 145.2V163.5M358.5 147.5V163.5M361.5 144.2V163.5M362.5 143.3V163.5M363.5 146.5V163.5M364.5 147.5V163.5M365.5 146.0V163.5M367.5 146.2V163.5M368.5 146.9V163.5M370.5 145.6V163.5M371.5 142.2V163.5M373.5 144.6V163.5M377.5 149.2V163.5M378.5 143.3V163.5M379.5 142.1V163.5M380.5 144.4V163.5M383.5 144.0V163.5M385.5 140.3V163.5M386.5 144.8V163.5M389.5 144.5V163.5M391.5 140.9V163.5M397.5 146.5V163.5M398.5 147.8V163.5M399.5 148.2V163.5M405.5 145.5V163.5M406.5 147.2V163.5M410.5 147.3V163.5M413.5 142.9V163.5M414.5 147.1V163.5M417.5 145.3V163.5M418.5 144.7V163.5M423.5 143.6V163.5M424.5 145.9V163.5M425.5 138.6V163.5M426.5 143.4V163.5M427.5 143.9V163.5M428.5 148.1V163.5M432.5 146.3V163.5M433.5 146.9V163.5M434.5 142.1V163.5M436.5 142.2V163.5M438.5 145.4V163.5M440.5 142.5V163.5M443.5 148.9V163.5M445.5 147.8V163.5M447.5 142.5V163.5M450.5 143.0V163.5M452.5 143.7V163.5M453.5 147.5V163.5M455.5 144.0V163.5M456.5 146.4V163.5M457.5 144.1V163.5M459.5 146.8V163.5M461.5 148.9V163.5M462.5 151.8V163.5M465.5 143.3V163.5M467.5 142.4V163.5M470.5 144.9V163.5M472.5 143.4V163.5M473.5 142.8V163.5M474.5 145.2V163.5M478.5 142.6V163.5M480.5 142.2V163.5M483.5 143.8V163.5M485.5 148.2V163.5M487.5 147.9V163.5M488.5 140.0V163.5M489.5 141.6V163.5M492.5 140.4V163.5M493.5 139.9V163.5M496.5 138.9V163.5M498.5 147.0V163.5M500.5 146.1V163.5M501.5 148.1V163.5M502.5 144.3V163.5M504.5 145.0V163.5M505.5 146.8V163.5M506.5 141.8V163.5M507.5 146.7V163.5M508.5 144.1V163.5M510.5 144.3V163.5M511.5 142.7V163.5M512.5 147.4V163.5M517.5 143.0V163.5M518.5 145.5V163.5M519.5 145.1V163.5M521.5 143.2V163.5M525.5 144.9V163.5M526.5 148.1V163.5M527.5 143.6V163.5M529.5 147.6V163.5M530.5 146.2V163.5M533.5 145.8V163.5M534.5 142.2V163.5M537.5 139.5V163.5M541.5 145.2V163.5M542.5 142.6V163.5M543.5 150.1V163.5M545.5 147.9V163.5M546.5 147.3V163.5M547.5 144.1V163.5M549.5 144.7V163.5M553.5 146.4V163.5M556.5 146.3V163.5M557.5 138.5V163.5M558.5 142.8V163.5M559.5 148.2V163.5M560.5 142.6V163.5M562.5 145.0V163.5M563.5 145.3V163.5M564.5 146.7V163.5M566.5 144.5V163.5M573.5 144.9V163.5M574.5 143.8V163.5M575.5 145.7V163.5M576.5 144.0V163.5M577.5 146.3V163.5M580.5 147.7V163.5M581.5 143.1V163.5M583.5 143.4V163.5M584.5 144.5V163.5M585.5 142.4V163.5M587.5 147.1V163.5M591.5 146.0V163.5M594.5 148.3V163.5M596.5 140.7V163.5M598.5 142.0V163.5M599.5 145.4V163.5M600.5 144.4V163.5M602.5 145.4V163.5M603.5 145.1V163.5M604.5 146.1V163.5M606.5 143.7V163.5M607.5 141.9V163.5M610.5 141.6V163.5M614.5 147.5V163.5M616.5 144.7V163.5M618.5 143.1V163.5M620.5 146.5V163.5M624.5 142.4V163.5M625.5 146.8V163.5M626.5 141.3V163.5M630.5 143.6V163.5M631.5 145.4V163.5M633.5 145.7V163.5M634.5 138.8V163.5M635.5 146.1V163.5M637.5 145.1V163.5M638.5 147.3V163.5M640.5 143.9V163.5M642.5 146.9V163.5M643.5 145.9V163.5M645.5 147.5V163.5M646.5 144.5V163.5M648.5 144.1V163.5M649.5 143.9V163.5M652.5 144.4V163.5M653.5 139.6V163.5M654.5 144.2V163.5M655.5 144.8V163.5M656.5 138.5V163.5M657.5 146.0V163.5M659.5 143.8V163.5M663.5 140.4V163.5M664.5 143.2V163.5M665.5 147.2V163.5M666.5 140.3V163.5M671.5 144.1V163.5M672.5 142.0V163.5M676.5 145.7V163.5M682.5 147.4V163.5M683.5 150.7V163.5M685.5 142.7V163.5M689.5 142.9V163.5M690.5 144.4V163.5M692.5 144.9V163.5M693.5 146.4V163.5M695.5 142.2V163.5M696.5 143.3V163.5M701.5 145.7V163.5M703.5 151.0V163.5M704.5 143.3V163.5M708.5 146.7V163.5M710.5 145.4V163.5M711.5 143.0V163.5M712.5 142.8V163.5M713.5 138.5V163.5M714.5 147.4V163.5M716.5 143.1V163.5M718.5 144.4V163.5M721.5 146.6V163.5M724.5 144.9V163.5M725.5 145.6V163.5M726.5 145.4V163.5M727.5 141.4V163.5M729.5 140.8V163.5M730.5 138.5V163.5M731.5 145.4V163.5M733.5 143.4V163.5M735.5 147.0V163.5M736.5 145.3V163.5M737.5 147.3V163.5M744.5 144.1V163.5M745.5 142.3V163.5M746.5 148.8V163.5M748.5 148.8V163.5M749.5 144.6V163.5M750.5 142.4V163.5M751.5 145.1V163.5M752.5 143.0V163.5M757.5 146.5V163.5M760.5 145.5V163.5M762.5 141.9V163.5M765.5 147.2V163.5M766.5 145.1V163.5M777.5 146.2V163.5M778.5 139.6V163.5M779.5 147.3V163.5M780.5 143.8V163.5M781.5 146.1V163.5M783.5 148.1V163.5M784.5 146.4V163.5M788.5 145.1V163.5M791.5 147.2V163.5M792.5 147.8V163.5M793.5 144.3V163.5M794.5 142.0V163.5M797.5 146.4V163.5M798.5 146.3V163.5M799.5 145.8V163.5M801.5 148.1V163.5M802.5 144.4V163.5M803.5 143.1V163.5M804.5 146.3V163.5M805.5 148.1V163.5M806.5 143.7V163.5M807.5 146.8V163.5M808.5 145.5V163.5M811.5 143.1V163.5M813.5 148.4V163.5M815.5 144.9V163.5M817.5 145.1V163.5M818.5 145.2V163.5M819.5 145.5V163.5M820.5 151.4V163.5M822.5 146.6V163.5M823.5 143.3V163.5M826.5 147.3V163.5M827.5 147.3V163.5M828.5 147.2V163.5M830.5 141.4V163.5M831.5 146.1V163.5M832.5 142.1V163.5M833.5 140.7V163.5M834.5 145.8V163.5M835.5 144.0V163.5M836.5 148.0V163.5M839.5 144.8V163.5M840.5 148.6V163.5M841.5 146.9V163.5M843.5 140.5V163.5M844.5 146.7V163.5M845.5 142.0V163.5M848.5 144.0V163.5M850.5 150.4V163.5M852.5 144.3V163.5M855.5 140.3V163.5M856.5 144.5V163.5M857.5 141.7V163.5M858.5 146.1V163.5M860.5 141.8V163.5M861.5 145.7V163.5M862.5 138.5V163.5M863.5 145.2V163.5M864.5 145.1V163.5M866.5 144.3V163.5M867.5 145.8V163.5M868.5 145.4V163.5M869.5 143.0V163.5M871.5 144.4V163.5M872.5 149.9V163.5M873.5 144.9V163.5M874.5 143.0V163.5M875.5 146.8V163.5M877.5 145.9V163.5M881.5 144.1V163.5M884.5 142.3V163.5M885.5 143.6V163.5M886.5 144.4V163.5M887.5 145.1V163.5M888.5 142.8V163.5M889.5 146.5V163.5M890.5 145.8V163.5M894.5 144.7V163.5M895.5 145.4V163.5M896.5 143.1V163.5M898.5 145.8V163.5M901.5 141.3V163.5M902.5 149.0V163.5M904.5 144.3V163.5M905.5 146.0V163.5M906.5 147.7V163.5M907.5 143.2V163.5M908.5 146.2V163.5M910.5 150.0V163.5M912.5 145.1V163.5M913.5 142.4V163.5M914.5 141.9V163.5M915.5 146.0V163.5M916.5 144.9V163.5M919.5 142.1V163.5M923.5 145.4V163.5M924.5 144.1V163.5M926.5 147.1V163.5M927.5 146.4V163.5M930.5 142.2V163.5M932.5 144.7V163.5M933.5 148.5V163.5M936.5 144.0V163.5M937.5 146.5V163.5M939.5 148.8V163.5M940.5 145.5V163.5M944.5 145.1V163.5M945.5 145.0V163.5M946.5 150.1V163.5M947.5 145.2V163.5M949.5 142.7V163.5M951.5 146.3V163.5M953.5 143.7V163.5M954.5 141.3V163.5M955.5 147.6V163.5M956.5 145.7V163.5M957.5 147.0V163.5M958.5 145.2V163.5M960.5 142.2V163.5M961.5 146.0V163.5M963.5 143.8V163.5M964.5 147.7V163.5M966.5 143.9V163.5M968.5 146.1V163.5M969.5 141.1V163.5M970.5 144.6V163.5M971.5 141.9V163.5M973.5 148.4V163.5M975.5 146.1V163.5M976.5 145.9V163.5M977.5 149.9V163.5M978.5 143.2V163.5M980.5 147.4V163.5M982.5 148.4V163.5M983.5 145.9V163.5M984.5 147.3V163.5M985.5 140.1V163.5M987.5 142.0V163.5M989.5 140.3V163.5M991.5 138.5V163.5M992.5 145.2V163.5M994.5 147.2V163.5M995.5 142.9V163.5" stroke="#0d5eab" stroke-width="1" fill="none"/><path d="M184.5 165V178.4M187.5 165V178.3M189.5 165V179.4M192.5 165V180.9M194.5 165V180.9M197.5 165V184.7M202.5 165V179.5M206.5 165V185.0M208.5 165V183.9M210.5 165V180.0M230.5 165V181.6M231.5 165V182.9M234.5 165V181.8M237.5 165V180.2M247.5 165V178.3M249.5 165V182.7M257.5 165V174.3M259.5 165V179.9M265.5 165V179.7M271.5 165V176.2M275.5 165V183.4M279.5 165V176.1M281.5 165V184.8M285.5 165V182.5M286.5 165V181.7M308.5 165V179.3M316.5 165V179.8M320.5 165V181.3M322.5 165V178.1M327.5 165V179.8M328.5 165V184.3M335.5 165V180.3M336.5 165V186.3M348.5 165V184.2M350.5 165V179.3M360.5 165V178.2M374.5 165V178.5M376.5 165V185.4M382.5 165V183.2M387.5 165V182.4M390.5 165V185.8M392.5 165V182.4M394.5 165V181.8M400.5 165V183.0M404.5 165V180.3M407.5 165V179.2M411.5 165V178.3M412.5 165V176.8M416.5 165V178.5M419.5 165V176.3M420.5 165V175.8M429.5 165V178.1M430.5 165V183.6M431.5 165V179.8M437.5 165V180.4M442.5 165V180.3M448.5 165V178.6M458.5 165V178.4M463.5 165V186.5M464.5 165V179.7M476.5 165V183.0M477.5 165V184.1M479.5 165V180.8M481.5 165V181.7M482.5 165V180.0M484.5 165V182.9M491.5 165V178.3M494.5 165V179.5M495.5 165V177.3M497.5 165V180.9M503.5 165V176.7M513.5 165V181.5M515.5 165V183.5M522.5 165V181.4M524.5 165V176.6M528.5 165V177.0M532.5 165V179.5M535.5 165V180.9M536.5 165V175.5M540.5 165V178.1M550.5 165V183.4M552.5 165V183.3M554.5 165V173.8M561.5 165V186.6M565.5 165V185.2M567.5 165V179.4M569.5 165V178.9M570.5 165V184.4M571.5 165V182.0M572.5 165V179.2M578.5 165V180.3M586.5 165V176.8M589.5 165V183.9M592.5 165V181.8M601.5 165V181.4M609.5 165V177.6M611.5 165V178.3M612.5 165V181.0M621.5 165V179.7M623.5 165V175.5M628.5 165V182.0M636.5 165V184.6M644.5 165V185.1M651.5 165V185.7M660.5 165V182.0M667.5 165V180.6M670.5 165V181.2M673.5 165V184.4M674.5 165V179.3M678.5 165V185.0M680.5 165V181.7M681.5 165V177.9M688.5 165V183.1M691.5 165V180.1M697.5 165V179.9M698.5 165V178.0M700.5 165V177.3M702.5 165V176.0M706.5 165V180.6M707.5 165V177.7M709.5 165V180.4M719.5 165V182.8M720.5 165V182.1M723.5 165V175.7M734.5 165V182.6M738.5 165V179.2M739.5 165V179.7M742.5 165V180.0M747.5 165V179.2M753.5 165V184.7M755.5 165V178.3M764.5 165V177.2M768.5 165V184.3M770.5 165V175.9M773.5 165V178.2M775.5 165V181.4M782.5 165V182.3M785.5 165V183.3M789.5 165V180.0M790.5 165V184.1M795.5 165V181.7M800.5 165V181.0M809.5 165V178.9M812.5 165V180.3M816.5 165V181.9M825.5 165V182.3M829.5 165V180.8M837.5 165V182.5M838.5 165V182.4M842.5 165V179.3M847.5 165V181.4M851.5 165V178.7M853.5 165V180.9M854.5 165V181.4M859.5 165V178.2M865.5 165V180.8M876.5 165V183.2M879.5 165V178.4M882.5 165V180.6M891.5 165V182.6M892.5 165V176.1M893.5 165V184.1M899.5 165V181.4M900.5 165V180.3M909.5 165V188.0M911.5 165V180.5M918.5 165V175.8M920.5 165V176.2M921.5 165V185.4M928.5 165V181.0M934.5 165V176.7M938.5 165V184.3M941.5 165V179.5M943.5 165V180.5M959.5 165V185.5M962.5 165V182.4M967.5 165V175.3M993.5 165V180.8" stroke="#f4889c" stroke-width="1" fill="none"/><path d="M180.5 165V183.1M181.5 165V178.0M182.5 165V183.8M185.5 165V186.2M188.5 165V182.5M191.5 165V180.1M193.5 165V184.2M195.5 165V179.0M196.5 165V181.1M198.5 165V180.9M200.5 165V177.2M203.5 165V181.6M204.5 165V182.7M205.5 165V178.4M207.5 165V178.8M209.5 165V182.8M211.5 165V176.7M212.5 165V181.3M214.5 165V185.0M215.5 165V182.6M216.5 165V183.6M219.5 165V178.4M221.5 165V180.3M222.5 165V178.6M223.5 165V179.7M224.5 165V176.7M225.5 165V179.6M226.5 165V180.7M227.5 165V182.4M228.5 165V182.3M232.5 165V181.1M233.5 165V182.0M235.5 165V177.6M238.5 165V179.7M239.5 165V180.0M240.5 165V178.6M242.5 165V179.4M243.5 165V184.2M244.5 165V181.2M248.5 165V179.5M250.5 165V178.9M252.5 165V178.4M253.5 165V176.6M254.5 165V182.9M256.5 165V180.5M258.5 165V180.5M260.5 165V177.5M262.5 165V179.0M263.5 165V181.0M266.5 165V177.8M267.5 165V180.3M268.5 165V180.5M269.5 165V182.3M272.5 165V182.8M277.5 165V182.2M280.5 165V183.5M282.5 165V183.3M283.5 165V180.2M284.5 165V182.8M287.5 165V182.2M288.5 165V183.8M290.5 165V178.7M291.5 165V178.8M292.5 165V178.1M293.5 165V174.5M295.5 165V181.5M296.5 165V179.1M297.5 165V180.2M298.5 165V180.8M299.5 165V181.7M300.5 165V185.9M301.5 165V180.6M302.5 165V180.6M303.5 165V181.1M304.5 165V180.7M305.5 165V185.4M307.5 165V180.6M309.5 165V185.1M310.5 165V180.5M311.5 165V180.6M312.5 165V185.1M314.5 165V181.5M317.5 165V183.0M318.5 165V183.2M319.5 165V178.5M321.5 165V183.9M323.5 165V176.9M325.5 165V183.9M329.5 165V177.6M330.5 165V182.6M331.5 165V177.9M332.5 165V180.2M334.5 165V176.5M338.5 165V182.2M339.5 165V178.8M340.5 165V178.3M342.5 165V182.4M343.5 165V179.4M344.5 165V181.2M346.5 165V184.3M349.5 165V183.5M352.5 165V181.5M353.5 165V188.0M354.5 165V181.4M355.5 165V182.3M357.5 165V181.4M358.5 165V179.8M361.5 165V181.2M362.5 165V181.5M363.5 165V179.1M364.5 165V178.5M365.5 165V178.5M367.5 165V179.2M368.5 165V178.1M370.5 165V180.9M371.5 165V184.2M373.5 165V176.7M377.5 165V176.8M378.5 165V183.7M379.5 165V181.3M380.5 165V180.1M383.5 165V182.9M385.5 165V183.1M386.5 165V181.2M389.5 165V181.0M391.5 165V181.6M397.5 165V179.1M398.5 165V174.8M399.5 165V177.8M405.5 165V179.5M406.5 165V177.3M410.5 165V179.0M413.5 165V182.2M414.5 165V176.9M417.5 165V180.1M418.5 165V181.0M423.5 165V183.4M424.5 165V177.4M425.5 165V185.4M426.5 165V180.6M427.5 165V182.0M428.5 165V177.2M432.5 165V178.3M433.5 165V177.2M434.5 165V182.0M436.5 165V183.2M438.5 165V182.3M440.5 165V182.4M443.5 165V178.8M445.5 165V176.0M447.5 165V180.5M450.5 165V182.4M452.5 165V179.3M453.5 165V176.6M455.5 165V183.6M456.5 165V178.6M457.5 165V182.9M459.5 165V179.4M461.5 165V176.0M462.5 165V173.8M465.5 165V187.3M467.5 165V182.1M470.5 165V180.4M472.5 165V179.2M473.5 165V181.9M474.5 165V179.9M478.5 165V181.6M480.5 165V181.4M483.5 165V180.7M485.5 165V176.9M487.5 165V178.3M488.5 165V182.7M489.5 165V183.9M492.5 165V183.1M493.5 165V183.2M496.5 165V185.9M498.5 165V177.7M500.5 165V178.2M501.5 165V178.9M502.5 165V182.6M504.5 165V181.3M505.5 165V180.1M506.5 165V182.5M507.5 165V177.6M508.5 165V181.8M510.5 165V181.9M511.5 165V178.8M512.5 165V178.9M517.5 165V181.2M518.5 165V179.7M519.5 165V178.2M521.5 165V182.4M525.5 165V183.0M526.5 165V179.5M527.5 165V182.3M529.5 165V178.2M530.5 165V177.6M533.5 165V182.9M534.5 165V182.1M537.5 165V184.6M541.5 165V178.3M542.5 165V183.1M543.5 165V172.1M545.5 165V180.4M546.5 165V178.2M547.5 165V181.1M549.5 165V181.6M553.5 165V176.8M556.5 165V178.3M557.5 165V186.0M558.5 165V184.6M559.5 165V177.1M560.5 165V184.9M562.5 165V181.1M563.5 165V179.1M564.5 165V179.7M566.5 165V182.7M573.5 165V180.9M574.5 165V182.9M575.5 165V182.5M576.5 165V183.1M577.5 165V180.3M580.5 165V178.6M581.5 165V181.8M583.5 165V183.5M584.5 165V180.1M585.5 165V182.8M587.5 165V178.6M591.5 165V178.7M594.5 165V180.1M596.5 165V184.5M598.5 165V183.3M599.5 165V180.2M600.5 165V180.5M602.5 165V181.8M603.5 165V178.3M604.5 165V177.0M606.5 165V180.6M607.5 165V180.3M610.5 165V181.7M614.5 165V180.1M616.5 165V182.9M618.5 165V182.5M620.5 165V179.3M624.5 165V183.8M625.5 165V178.3M626.5 165V183.4M630.5 165V182.0M631.5 165V180.5M633.5 165V180.4M634.5 165V188.0M635.5 165V179.0M637.5 165V179.5M638.5 165V182.0M640.5 165V180.9M642.5 165V179.6M643.5 165V183.0M645.5 165V177.1M646.5 165V180.0M648.5 165V179.4M649.5 165V179.7M652.5 165V178.1M653.5 165V184.6M654.5 165V180.8M655.5 165V180.9M656.5 165V188.0M657.5 165V178.3M659.5 165V181.3M663.5 165V184.7M664.5 165V182.0M665.5 165V177.9M666.5 165V181.2M671.5 165V180.6M672.5 165V182.0M676.5 165V179.3M682.5 165V179.1M683.5 165V175.5M685.5 165V183.0M689.5 165V187.8M690.5 165V180.0M692.5 165V181.6M693.5 165V178.7M695.5 165V181.4M696.5 165V182.7M701.5 165V179.2M703.5 165V174.7M704.5 165V180.5M708.5 165V177.5M710.5 165V180.7M711.5 165V183.8M712.5 165V180.7M713.5 165V184.1M714.5 165V178.1M716.5 165V182.0M718.5 165V180.6M721.5 165V176.5M724.5 165V180.9M725.5 165V177.8M726.5 165V180.8M727.5 165V183.0M729.5 165V186.9M730.5 165V187.1M731.5 165V180.0M733.5 165V183.5M735.5 165V175.5M736.5 165V179.9M737.5 165V176.5M744.5 165V183.3M745.5 165V184.8M746.5 165V179.5M748.5 165V175.1M749.5 165V184.6M750.5 165V185.2M751.5 165V179.9M752.5 165V181.3M757.5 165V176.8M760.5 165V179.5M762.5 165V184.3M765.5 165V177.9M766.5 165V185.1M777.5 165V179.8M778.5 165V186.0M779.5 165V180.5M780.5 165V181.2M781.5 165V177.9M783.5 165V178.1M784.5 165V179.3M788.5 165V182.0M791.5 165V176.3M792.5 165V177.1M793.5 165V180.9M794.5 165V182.6M797.5 165V179.5M798.5 165V178.1M799.5 165V181.6M801.5 165V177.6M802.5 165V179.0M803.5 165V183.5M804.5 165V180.4M805.5 165V184.7M806.5 165V181.5M807.5 165V177.8M808.5 165V179.5M811.5 165V181.5M813.5 165V176.6M815.5 165V180.6M817.5 165V181.4M818.5 165V179.6M819.5 165V181.8M820.5 165V176.4M822.5 165V178.7M823.5 165V180.7M826.5 165V177.8M827.5 165V177.1M828.5 165V180.1M830.5 165V183.5M831.5 165V181.4M832.5 165V183.1M833.5 165V183.8M834.5 165V180.4M835.5 165V179.6M836.5 165V177.7M839.5 165V180.5M840.5 165V179.8M841.5 165V176.4M843.5 165V185.5M844.5 165V178.6M845.5 165V180.9M848.5 165V180.2M850.5 165V174.7M852.5 165V182.1M855.5 165V185.9M856.5 165V181.2M857.5 165V182.5M858.5 165V181.1M860.5 165V184.5M861.5 165V177.6M862.5 165V186.4M863.5 165V180.0M864.5 165V177.2M866.5 165V180.7M867.5 165V176.2M868.5 165V180.9M869.5 165V180.8M871.5 165V180.7M872.5 165V176.6M873.5 165V183.5M874.5 165V183.8M875.5 165V180.8M877.5 165V182.6M881.5 165V182.1M884.5 165V184.2M885.5 165V181.8M886.5 165V180.9M887.5 165V180.3M888.5 165V181.1M889.5 165V177.3M890.5 165V181.2M894.5 165V180.2M895.5 165V181.2M896.5 165V180.6M898.5 165V181.9M901.5 165V181.8M902.5 165V177.6M904.5 165V177.6M905.5 165V180.1M906.5 165V176.2M907.5 165V181.8M908.5 165V179.0M910.5 165V174.7M912.5 165V179.4M913.5 165V181.9M914.5 165V181.9M915.5 165V179.3M916.5 165V181.0M919.5 165V183.7M923.5 165V179.2M924.5 165V180.1M926.5 165V178.9M927.5 165V179.3M930.5 165V184.5M932.5 165V184.8M933.5 165V178.0M936.5 165V181.8M937.5 165V177.2M939.5 165V177.4M940.5 165V179.8M944.5 165V180.5M945.5 165V181.1M946.5 165V176.3M947.5 165V180.5M949.5 165V180.8M951.5 165V179.1M953.5 165V181.1M954.5 165V182.2M955.5 165V178.7M956.5 165V177.6M957.5 165V176.7M958.5 165V176.1M960.5 165V185.3M961.5 165V177.0M963.5 165V180.8M964.5 165V178.3M966.5 165V181.4M968.5 165V180.0M969.5 165V184.0M970.5 165V181.8M971.5 165V183.0M973.5 165V177.8M975.5 165V179.4M976.5 165V180.1M977.5 165V175.4M978.5 165V181.4M980.5 165V176.7M982.5 165V177.5M983.5 165V177.6M984.5 165V176.2M985.5 165V183.7M987.5 165V184.3M989.5 165V183.3M991.5 165V186.8M992.5 165V179.7M994.5 165V178.9M995.5 165V182.2" stroke="#e8002c" stroke-width="1" fill="none"/><rect x="180" y="162.4" width="816" height="2.3" fill="#0d5eab"/><path d="M189.5 209.1V256M192.5 221.4V256M193.5 225.0V256M194.5 217.8V256M195.5 217.5V256M196.5 225.5V256M200.5 222.2V256M205.5 217.6V256M221.5 219.6V256M227.5 220.4V256M234.5 219.0V256M242.5 221.5V256M247.5 220.8V256M258.5 219.3V256M267.5 219.3V256M271.5 218.6V256M277.5 217.4V256M288.5 224.0V256M290.5 215.9V256M297.5 220.3V256M298.5 220.1V256M299.5 225.8V256M302.5 222.3V256M305.5 220.7V256M308.5 219.5V256M310.5 218.3V256M311.5 222.4V256M312.5 220.6V256M328.5 217.3V256M334.5 219.1V256M338.5 219.3V256M343.5 217.8V256M346.5 217.8V256M348.5 218.2V256M349.5 218.0V256M352.5 220.1V256M354.5 217.3V256M355.5 216.9V256M360.5 220.3V256M361.5 211.9V256M364.5 210.1V256M371.5 218.4V256M386.5 218.9V256M394.5 220.7V256M400.5 219.2V256M407.5 217.0V256M416.5 223.6V256M417.5 219.5V256M427.5 217.7V256M428.5 218.4V256M432.5 218.0V256M433.5 222.2V256M436.5 211.4V256M437.5 219.8V256M447.5 215.8V256M448.5 216.6V256M453.5 220.9V256M456.5 220.3V256M467.5 218.6V256M478.5 219.9V256M480.5 219.2V256M491.5 216.9V256M496.5 219.7V256M506.5 226.2V256M512.5 218.1V256M521.5 207.0V256M525.5 217.8V256M526.5 222.3V256M533.5 222.4V256M535.5 218.5V256M537.5 220.5V256M540.5 216.8V256M541.5 220.7V256M543.5 219.6V256M546.5 220.1V256M550.5 221.8V256M553.5 212.1V256M562.5 220.8V256M563.5 217.8V256M570.5 219.3V256M586.5 215.1V256M587.5 224.5V256M591.5 221.4V256M596.5 225.7V256M600.5 224.1V256M601.5 220.0V256M604.5 213.0V256M621.5 218.9V256M626.5 219.8V256M631.5 220.3V256M633.5 217.0V256M636.5 215.8V256M645.5 221.2V256M646.5 211.6V256M648.5 207.0V256M649.5 219.6V256M651.5 222.7V256M653.5 220.1V256M660.5 222.1V256M666.5 218.0V256M676.5 221.9V256M689.5 220.8V256M690.5 217.5V256M692.5 224.4V256M693.5 225.0V256M696.5 211.7V256M718.5 224.9V256M723.5 219.3V256M731.5 220.2V256M738.5 221.4V256M739.5 221.8V256M742.5 223.1V256M748.5 219.0V256M752.5 222.0V256M755.5 220.2V256M764.5 220.9V256M773.5 216.4V256M775.5 219.5V256M788.5 218.2V256M790.5 223.9V256M797.5 223.0V256M798.5 217.7V256M808.5 221.1V256M818.5 219.4V256M822.5 224.8V256M828.5 217.6V256M829.5 219.6V256M830.5 208.2V256M840.5 220.7V256M841.5 217.6V256M855.5 222.5V256M857.5 211.4V256M858.5 222.5V256M872.5 212.4V256M877.5 224.5V256M882.5 224.6V256M891.5 219.0V256M892.5 221.3V256M896.5 217.9V256M902.5 219.1V256M904.5 221.9V256M906.5 216.9V256M910.5 223.7V256M911.5 214.9V256M913.5 217.6V256M921.5 221.9V256M927.5 222.0V256M932.5 217.5V256M934.5 218.9V256M938.5 222.2V256M941.5 220.8V256M947.5 211.6V256M949.5 222.4V256M951.5 217.1V256M953.5 225.2V256M959.5 223.7V256M960.5 224.1V256M961.5 223.2V256M962.5 215.8V256M964.5 218.5V256M967.5 222.1V256M968.5 215.5V256M971.5 220.6V256M973.5 215.9V256M982.5 219.6V256M983.5 216.0V256M985.5 222.8V256M989.5 221.4V256M993.5 218.4V256" stroke="#c58ccb" stroke-width="1" fill="none"/><path d="M180.5 221.3V256M181.5 208.3V256M184.5 217.9V256M185.5 219.9V256M187.5 220.1V256M188.5 219.7V256M191.5 224.2V256M197.5 221.7V256M202.5 219.3V256M203.5 208.5V256M204.5 229.7V256M206.5 217.2V256M207.5 216.5V256M208.5 222.3V256M210.5 214.5V256M211.5 222.1V256M212.5 218.3V256M214.5 222.8V256M216.5 225.2V256M219.5 217.0V256M222.5 217.2V256M223.5 217.4V256M224.5 220.9V256M225.5 215.2V256M226.5 220.9V256M228.5 216.4V256M230.5 222.0V256M231.5 218.9V256M233.5 219.6V256M235.5 221.3V256M237.5 217.7V256M238.5 217.5V256M239.5 223.8V256M240.5 219.0V256M243.5 221.9V256M244.5 222.2V256M248.5 220.6V256M250.5 220.6V256M252.5 214.7V256M253.5 220.9V256M254.5 215.5V256M256.5 220.8V256M257.5 218.5V256M259.5 226.1V256M260.5 220.0V256M262.5 220.1V256M263.5 219.1V256M265.5 207.0V256M266.5 220.1V256M268.5 218.5V256M269.5 216.6V256M272.5 222.0V256M279.5 216.6V256M280.5 219.8V256M281.5 219.2V256M282.5 222.1V256M283.5 222.1V256M284.5 220.8V256M285.5 218.7V256M286.5 221.9V256M287.5 220.6V256M291.5 216.5V256M292.5 222.8V256M293.5 220.9V256M295.5 221.2V256M296.5 220.4V256M300.5 216.7V256M301.5 220.4V256M304.5 219.0V256M307.5 219.1V256M309.5 216.4V256M314.5 222.6V256M316.5 216.0V256M317.5 222.5V256M318.5 222.1V256M319.5 218.9V256M320.5 218.9V256M321.5 221.1V256M322.5 224.0V256M323.5 226.1V256M325.5 221.4V256M327.5 218.5V256M330.5 219.0V256M331.5 221.8V256M332.5 219.4V256M335.5 220.6V256M336.5 222.0V256M342.5 220.6V256M350.5 224.3V256M353.5 215.0V256M357.5 220.3V256M358.5 220.8V256M362.5 221.0V256M363.5 219.0V256M367.5 218.0V256M368.5 222.8V256M370.5 217.2V256M373.5 222.9V256M376.5 223.7V256M377.5 219.7V256M378.5 220.1V256M379.5 221.6V256M380.5 217.7V256M382.5 220.8V256M383.5 216.5V256M385.5 221.2V256M387.5 223.0V256M389.5 217.3V256M390.5 217.7V256M391.5 220.5V256M392.5 225.2V256M397.5 223.3V256M398.5 218.3V256M399.5 218.5V256M404.5 222.0V256M405.5 216.5V256M406.5 224.1V256M410.5 219.7V256M413.5 219.4V256M414.5 222.8V256M418.5 221.7V256M419.5 220.6V256M420.5 215.0V256M423.5 214.9V256M424.5 220.9V256M426.5 221.7V256M429.5 221.8V256M430.5 225.2V256M431.5 219.2V256M434.5 221.3V256M438.5 221.0V256M440.5 225.1V256M442.5 220.3V256M443.5 217.2V256M445.5 222.3V256M450.5 221.0V256M452.5 222.4V256M455.5 213.7V256M457.5 224.0V256M458.5 215.1V256M459.5 216.7V256M461.5 222.4V256M462.5 209.4V256M463.5 228.3V256M464.5 219.9V256M465.5 222.2V256M472.5 221.4V256M473.5 219.6V256M477.5 218.8V256M482.5 217.8V256M483.5 219.1V256M484.5 219.1V256M485.5 222.2V256M487.5 226.5V256M488.5 222.1V256M489.5 221.8V256M492.5 220.8V256M493.5 222.9V256M494.5 220.8V256M495.5 219.7V256M497.5 223.1V256M498.5 221.9V256M500.5 219.2V256M501.5 218.9V256M502.5 218.0V256M504.5 219.7V256M505.5 224.7V256M507.5 220.8V256M508.5 219.4V256M511.5 216.6V256M513.5 221.5V256M515.5 224.9V256M517.5 216.5V256M518.5 220.7V256M522.5 220.6V256M524.5 217.5V256M527.5 223.3V256M528.5 221.6V256M529.5 221.2V256M530.5 225.4V256M532.5 219.0V256M534.5 221.7V256M536.5 218.2V256M542.5 220.7V256M545.5 217.9V256M547.5 222.2V256M549.5 215.6V256M552.5 212.7V256M554.5 207.0V256M556.5 223.9V256M557.5 215.1V256M558.5 220.5V256M559.5 222.0V256M560.5 214.7V256M561.5 219.5V256M564.5 215.8V256M565.5 215.4V256M566.5 217.4V256M569.5 220.6V256M571.5 224.3V256M572.5 217.1V256M573.5 215.8V256M574.5 217.0V256M575.5 215.4V256M576.5 216.3V256M578.5 223.9V256M580.5 216.3V256M581.5 224.4V256M583.5 216.8V256M584.5 218.0V256M585.5 217.2V256M589.5 215.6V256M592.5 216.6V256M594.5 222.9V256M598.5 220.7V256M602.5 223.5V256M603.5 217.6V256M606.5 218.3V256M607.5 218.1V256M609.5 211.5V256M610.5 222.6V256M611.5 223.4V256M614.5 222.1V256M618.5 219.1V256M620.5 219.7V256M623.5 225.2V256M624.5 214.1V256M625.5 221.4V256M628.5 216.8V256M630.5 220.7V256M634.5 222.4V256M635.5 212.5V256M637.5 217.5V256M638.5 213.4V256M640.5 219.5V256M642.5 219.8V256M644.5 220.4V256M652.5 216.6V256M654.5 225.0V256M655.5 217.4V256M656.5 220.9V256M657.5 220.8V256M659.5 223.9V256M664.5 225.7V256M667.5 218.5V256M670.5 220.1V256M671.5 220.5V256M672.5 217.8V256M673.5 217.0V256M674.5 214.0V256M678.5 224.5V256M680.5 219.7V256M681.5 224.9V256M682.5 224.8V256M683.5 216.0V256M685.5 221.3V256M688.5 222.8V256M691.5 219.8V256M695.5 216.4V256M698.5 221.4V256M700.5 221.6V256M701.5 222.9V256M702.5 224.1V256M703.5 222.9V256M704.5 223.5V256M710.5 221.2V256M711.5 223.5V256M712.5 207.9V256M713.5 221.8V256M716.5 217.8V256M719.5 218.8V256M720.5 220.3V256M724.5 215.4V256M725.5 219.4V256M726.5 222.9V256M729.5 214.7V256M730.5 218.2V256M733.5 219.6V256M734.5 219.2V256M735.5 223.8V256M736.5 220.2V256M737.5 219.7V256M744.5 218.8V256M745.5 219.7V256M746.5 219.2V256M747.5 223.6V256M751.5 218.7V256M753.5 220.1V256M757.5 225.1V256M760.5 222.2V256M762.5 218.4V256M765.5 219.8V256M766.5 218.5V256M768.5 223.5V256M770.5 222.2V256M777.5 217.0V256M778.5 219.3V256M779.5 207.0V256M780.5 222.5V256M781.5 220.8V256M782.5 223.4V256M783.5 221.9V256M784.5 209.6V256M785.5 221.8V256M789.5 214.7V256M791.5 224.9V256M792.5 218.1V256M793.5 220.7V256M794.5 218.1V256M795.5 219.2V256M799.5 215.4V256M800.5 215.6V256M802.5 216.8V256M803.5 222.3V256M804.5 222.0V256M805.5 222.9V256M806.5 222.6V256M807.5 218.6V256M809.5 223.9V256M811.5 219.1V256M812.5 221.1V256M815.5 218.1V256M816.5 219.2V256M817.5 218.1V256M819.5 215.3V256M823.5 220.5V256M825.5 223.3V256M826.5 222.9V256M827.5 211.8V256M832.5 215.3V256M833.5 216.1V256M834.5 217.1V256M835.5 220.0V256M836.5 222.4V256M837.5 221.6V256M838.5 218.0V256M839.5 223.9V256M842.5 221.7V256M843.5 221.0V256M844.5 219.2V256M845.5 217.5V256M847.5 220.6V256M848.5 220.3V256M850.5 221.8V256M851.5 225.7V256M854.5 216.7V256M856.5 219.6V256M860.5 220.6V256M861.5 218.7V256M862.5 217.7V256M864.5 218.2V256M865.5 220.8V256M866.5 218.4V256M867.5 223.1V256M869.5 217.8V256M871.5 222.9V256M873.5 218.1V256M874.5 221.9V256M876.5 220.1V256M879.5 226.0V256M881.5 215.9V256M884.5 219.1V256M885.5 207.0V256M886.5 219.0V256M888.5 219.3V256M889.5 217.9V256M890.5 227.0V256M893.5 223.3V256M894.5 221.0V256M895.5 218.3V256M898.5 223.8V256M899.5 220.5V256M901.5 219.8V256M907.5 221.2V256M909.5 220.7V256M912.5 215.7V256M914.5 218.1V256M915.5 216.7V256M916.5 216.2V256M918.5 219.4V256M919.5 219.5V256M920.5 219.5V256M923.5 207.0V256M926.5 221.5V256M928.5 221.8V256M930.5 221.5V256M933.5 222.4V256M936.5 215.3V256M937.5 222.4V256M939.5 222.2V256M943.5 215.5V256M944.5 225.2V256M945.5 220.5V256M946.5 216.6V256M954.5 218.9V256M956.5 223.7V256M957.5 215.7V256M958.5 219.5V256M963.5 219.1V256M966.5 216.3V256M969.5 218.8V256M970.5 219.7V256M975.5 220.2V256M976.5 214.7V256M977.5 225.5V256M978.5 217.2V256M980.5 220.7V256M984.5 219.1V256M987.5 225.2V256M991.5 207.8V256M992.5 220.6V256M994.5 219.0V256M995.5 221.4V256" stroke="#800080" stroke-width="1" fill="none"/><path d="M181.5 256.5V273M184.5 256.5V273M185.5 256.5V273M187.5 256.5V273M198.5 256.5V273M201.5 256.5V273M205.5 256.5V273M208.5 256.5V273M212.5 256.5V273M233.5 256.5V273M239.5 256.5V273M246.5 256.5V273M251.5 256.5V273M254.5 256.5V273M281.5 256.5V273M286.5 256.5V273M289.5 256.5V273M292.5 256.5V273M300.5 256.5V273M308.5 256.5V273M317.5 256.5V273M325.5 256.5V273M333.5 256.5V273M354.5 256.5V273M384.5 256.5V273M390.5 256.5V273M407.5 256.5V273M409.5 256.5V273M418.5 256.5V273M431.5 256.5V273M435.5 256.5V273M440.5 256.5V273M443.5 256.5V273M468.5 256.5V273M479.5 256.5V273M494.5 256.5V273M501.5 256.5V273M512.5 256.5V273M515.5 256.5V273M524.5 256.5V273M525.5 256.5V273M535.5 256.5V273M539.5 256.5V273M540.5 256.5V273M543.5 256.5V273M566.5 256.5V273M568.5 256.5V273M586.5 256.5V273M590.5 256.5V273M603.5 256.5V273M612.5 256.5V273M613.5 256.5V273M616.5 256.5V273M620.5 256.5V273M623.5 256.5V273M637.5 256.5V273M646.5 256.5V273M649.5 256.5V273M651.5 256.5V273M660.5 256.5V273M662.5 256.5V273M683.5 256.5V273M684.5 256.5V273M688.5 256.5V273M689.5 256.5V273M690.5 256.5V273M707.5 256.5V273M715.5 256.5V273M718.5 256.5V273M721.5 256.5V273M731.5 256.5V273M732.5 256.5V273M733.5 256.5V273M759.5 256.5V273M765.5 256.5V273M783.5 256.5V273M789.5 256.5V273M791.5 256.5V273M797.5 256.5V273M809.5 256.5V273M813.5 256.5V273M818.5 256.5V273M819.5 256.5V273M821.5 256.5V273M822.5 256.5V273M845.5 256.5V273M846.5 256.5V273M847.5 256.5V273M857.5 256.5V273M862.5 256.5V273M865.5 256.5V273M882.5 256.5V273M886.5 256.5V273M900.5 256.5V273M908.5 256.5V273M910.5 256.5V273M917.5 256.5V273M919.5 256.5V273M925.5 256.5V273M926.5 256.5V273M946.5 256.5V273M968.5 256.5V273M978.5 256.5V273M979.5 256.5V273M987.5 256.5V273M993.5 256.5V273M994.5 256.5V273" stroke="#b8b8b8" stroke-width="1" fill="none"/><path d="M186.5 256.5V273M190.5 256.5V273M195.5 256.5V273M199.5 256.5V273M200.5 256.5V273M203.5 256.5V273M215.5 256.5V273M220.5 256.5V273M224.5 256.5V273M225.5 256.5V273M229.5 256.5V273M230.5 256.5V273M232.5 256.5V273M238.5 256.5V273M241.5 256.5V273M248.5 256.5V273M249.5 256.5V273M252.5 256.5V273M256.5 256.5V273M261.5 256.5V273M266.5 256.5V273M271.5 256.5V273M272.5 256.5V273M274.5 256.5V273M278.5 256.5V273M282.5 256.5V273M283.5 256.5V273M290.5 256.5V273M298.5 256.5V273M299.5 256.5V273M303.5 256.5V273M315.5 256.5V273M318.5 256.5V273M319.5 256.5V273M326.5 256.5V273M327.5 256.5V273M331.5 256.5V273M334.5 256.5V273M336.5 256.5V273M338.5 256.5V273M339.5 256.5V273M340.5 256.5V273M347.5 256.5V273M356.5 256.5V273M357.5 256.5V273M359.5 256.5V273M360.5 256.5V273M362.5 256.5V273M374.5 256.5V273M383.5 256.5V273M388.5 256.5V273M393.5 256.5V273M397.5 256.5V273M399.5 256.5V273M412.5 256.5V273M413.5 256.5V273M421.5 256.5V273M425.5 256.5V273M426.5 256.5V273M427.5 256.5V273M433.5 256.5V273M439.5 256.5V273M442.5 256.5V273M447.5 256.5V273M456.5 256.5V273M466.5 256.5V273M476.5 256.5V273M477.5 256.5V273M480.5 256.5V273M493.5 256.5V273M502.5 256.5V273M508.5 256.5V273M511.5 256.5V273M523.5 256.5V273M531.5 256.5V273M537.5 256.5V273M542.5 256.5V273M545.5 256.5V273M556.5 256.5V273M559.5 256.5V273M561.5 256.5V273M563.5 256.5V273M564.5 256.5V273M571.5 256.5V273M573.5 256.5V273M577.5 256.5V273M579.5 256.5V273M581.5 256.5V273M588.5 256.5V273M596.5 256.5V273M600.5 256.5V273M607.5 256.5V273M634.5 256.5V273M659.5 256.5V273M661.5 256.5V273M669.5 256.5V273M670.5 256.5V273M673.5 256.5V273M678.5 256.5V273M682.5 256.5V273M686.5 256.5V273M697.5 256.5V273M698.5 256.5V273M700.5 256.5V273M702.5 256.5V273M708.5 256.5V273M709.5 256.5V273M711.5 256.5V273M713.5 256.5V273M716.5 256.5V273M727.5 256.5V273M736.5 256.5V273M746.5 256.5V273M753.5 256.5V273M760.5 256.5V273M762.5 256.5V273M763.5 256.5V273M766.5 256.5V273M767.5 256.5V273M768.5 256.5V273M771.5 256.5V273M772.5 256.5V273M773.5 256.5V273M774.5 256.5V273M775.5 256.5V273M776.5 256.5V273M786.5 256.5V273M792.5 256.5V273M794.5 256.5V273M795.5 256.5V273M803.5 256.5V273M814.5 256.5V273M826.5 256.5V273M828.5 256.5V273M832.5 256.5V273M833.5 256.5V273M841.5 256.5V273M848.5 256.5V273M849.5 256.5V273M850.5 256.5V273M851.5 256.5V273M852.5 256.5V273M855.5 256.5V273M858.5 256.5V273M868.5 256.5V273M878.5 256.5V273M884.5 256.5V273M885.5 256.5V273M889.5 256.5V273M892.5 256.5V273M907.5 256.5V273M913.5 256.5V273M918.5 256.5V273M921.5 256.5V273M922.5 256.5V273M927.5 256.5V273M930.5 256.5V273M932.5 256.5V273M937.5 256.5V273M955.5 256.5V273M959.5 256.5V273M960.5 256.5V273M961.5 256.5V273M964.5 256.5V273M966.5 256.5V273M971.5 256.5V273M972.5 256.5V273M977.5 256.5V273M989.5 256.5V273" stroke="#707070" stroke-width="1" fill="none"/><path d="M188.5 256.5V273M189.5 256.5V273M193.5 256.5V273M194.5 256.5V273M197.5 256.5V273M202.5 256.5V273M206.5 256.5V273M207.5 256.5V273M211.5 256.5V273M214.5 256.5V273M217.5 256.5V273M221.5 256.5V273M228.5 256.5V273M234.5 256.5V273M235.5 256.5V273M236.5 256.5V273M237.5 256.5V273M242.5 256.5V273M244.5 256.5V273M245.5 256.5V273M247.5 256.5V273M253.5 256.5V273M258.5 256.5V273M259.5 256.5V273M260.5 256.5V273M262.5 256.5V273M263.5 256.5V273M264.5 256.5V273M265.5 256.5V273M267.5 256.5V273M269.5 256.5V273M270.5 256.5V273M273.5 256.5V273M276.5 256.5V273M277.5 256.5V273M279.5 256.5V273M280.5 256.5V273M285.5 256.5V273M293.5 256.5V273M295.5 256.5V273M296.5 256.5V273M297.5 256.5V273M301.5 256.5V273M302.5 256.5V273M305.5 256.5V273M306.5 256.5V273M307.5 256.5V273M310.5 256.5V273M311.5 256.5V273M314.5 256.5V273M316.5 256.5V273M320.5 256.5V273M321.5 256.5V273M323.5 256.5V273M332.5 256.5V273M335.5 256.5V273M337.5 256.5V273M341.5 256.5V273M342.5 256.5V273M343.5 256.5V273M344.5 256.5V273M345.5 256.5V273M346.5 256.5V273M351.5 256.5V273M352.5 256.5V273M353.5 256.5V273M355.5 256.5V273M363.5 256.5V273M364.5 256.5V273M367.5 256.5V273M370.5 256.5V273M372.5 256.5V273M373.5 256.5V273M375.5 256.5V273M377.5 256.5V273M378.5 256.5V273M380.5 256.5V273M382.5 256.5V273M387.5 256.5V273M392.5 256.5V273M394.5 256.5V273M398.5 256.5V273M400.5 256.5V273M401.5 256.5V273M402.5 256.5V273M403.5 256.5V273M404.5 256.5V273M405.5 256.5V273M406.5 256.5V273M408.5 256.5V273M414.5 256.5V273M417.5 256.5V273M422.5 256.5V273M428.5 256.5V273M430.5 256.5V273M432.5 256.5V273M437.5 256.5V273M438.5 256.5V273M441.5 256.5V273M445.5 256.5V273M448.5 256.5V273M451.5 256.5V273M452.5 256.5V273M453.5 256.5V273M454.5 256.5V273M455.5 256.5V273M457.5 256.5V273M459.5 256.5V273M460.5 256.5V273M461.5 256.5V273M462.5 256.5V273M463.5 256.5V273M464.5 256.5V273M467.5 256.5V273M483.5 256.5V273M484.5 256.5V273M485.5 256.5V273M486.5 256.5V273M488.5 256.5V273M489.5 256.5V273M490.5 256.5V273M495.5 256.5V273M497.5 256.5V273M498.5 256.5V273M499.5 256.5V273M500.5 256.5V273M503.5 256.5V273M504.5 256.5V273M505.5 256.5V273M506.5 256.5V273M510.5 256.5V273M516.5 256.5V273M518.5 256.5V273M519.5 256.5V273M526.5 256.5V273M527.5 256.5V273M528.5 256.5V273M529.5 256.5V273M532.5 256.5V273M533.5 256.5V273M534.5 256.5V273M536.5 256.5V273M538.5 256.5V273M541.5 256.5V273M547.5 256.5V273M548.5 256.5V273M550.5 256.5V273M553.5 256.5V273M554.5 256.5V273M555.5 256.5V273M557.5 256.5V273M558.5 256.5V273M565.5 256.5V273M569.5 256.5V273M572.5 256.5V273M575.5 256.5V273M576.5 256.5V273M578.5 256.5V273M580.5 256.5V273M583.5 256.5V273M584.5 256.5V273M585.5 256.5V273M587.5 256.5V273M589.5 256.5V273M591.5 256.5V273M592.5 256.5V273M594.5 256.5V273M597.5 256.5V273M598.5 256.5V273M599.5 256.5V273M601.5 256.5V273M602.5 256.5V273M604.5 256.5V273M605.5 256.5V273M610.5 256.5V273M611.5 256.5V273M614.5 256.5V273M617.5 256.5V273M618.5 256.5V273M621.5 256.5V273M625.5 256.5V273M626.5 256.5V273M628.5 256.5V273M629.5 256.5V273M630.5 256.5V273M632.5 256.5V273M633.5 256.5V273M639.5 256.5V273M641.5 256.5V273M642.5 256.5V273M643.5 256.5V273M644.5 256.5V273M645.5 256.5V273M647.5 256.5V273M648.5 256.5V273M653.5 256.5V273M654.5 256.5V273M655.5 256.5V273M657.5 256.5V273M664.5 256.5V273M666.5 256.5V273M667.5 256.5V273M674.5 256.5V273M675.5 256.5V273M676.5 256.5V273M677.5 256.5V273M679.5 256.5V273M680.5 256.5V273M681.5 256.5V273M685.5 256.5V273M687.5 256.5V273M691.5 256.5V273M692.5 256.5V273M693.5 256.5V273M696.5 256.5V273M699.5 256.5V273M704.5 256.5V273M706.5 256.5V273M714.5 256.5V273M717.5 256.5V273M722.5 256.5V273M723.5 256.5V273M726.5 256.5V273M729.5 256.5V273M734.5 256.5V273M737.5 256.5V273M738.5 256.5V273M740.5 256.5V273M742.5 256.5V273M743.5 256.5V273M744.5 256.5V273M750.5 256.5V273M751.5 256.5V273M755.5 256.5V273M756.5 256.5V273M758.5 256.5V273M764.5 256.5V273M770.5 256.5V273M778.5 256.5V273M780.5 256.5V273M781.5 256.5V273M787.5 256.5V273M793.5 256.5V273M798.5 256.5V273M799.5 256.5V273M800.5 256.5V273M804.5 256.5V273M805.5 256.5V273M806.5 256.5V273M808.5 256.5V273M811.5 256.5V273M816.5 256.5V273M817.5 256.5V273M820.5 256.5V273M824.5 256.5V273M830.5 256.5V273M831.5 256.5V273M834.5 256.5V273M835.5 256.5V273M836.5 256.5V273M837.5 256.5V273M838.5 256.5V273M839.5 256.5V273M842.5 256.5V273M843.5 256.5V273M844.5 256.5V273M859.5 256.5V273M861.5 256.5V273M863.5 256.5V273M866.5 256.5V273M872.5 256.5V273M876.5 256.5V273M880.5 256.5V273M881.5 256.5V273M888.5 256.5V273M891.5 256.5V273M893.5 256.5V273M894.5 256.5V273M896.5 256.5V273M899.5 256.5V273M902.5 256.5V273M903.5 256.5V273M906.5 256.5V273M909.5 256.5V273M912.5 256.5V273M915.5 256.5V273M920.5 256.5V273M924.5 256.5V273M928.5 256.5V273M933.5 256.5V273M934.5 256.5V273M941.5 256.5V273M943.5 256.5V273M945.5 256.5V273M947.5 256.5V273M948.5 256.5V273M949.5 256.5V273M950.5 256.5V273M951.5 256.5V273M952.5 256.5V273M953.5 256.5V273M956.5 256.5V273M962.5 256.5V273M965.5 256.5V273M973.5 256.5V273M974.5 256.5V273M975.5 256.5V273M980.5 256.5V273M981.5 256.5V273M984.5 256.5V273M986.5 256.5V273M990.5 256.5V273M991.5 256.5V273M992.5 256.5V273M995.5 256.5V273" stroke="#000000" stroke-width="1" fill="none"/><path d="M201.5 256V264.5M210.5 256V264.3M253.5 256V264.2M288.5 256V263.7M324.5 256V261.1M333.5 256V264.6M343.5 256V263.6M349.5 256V261.4M374.5 256V263.8M390.5 256V267.7M401.5 256V262.5M419.5 256V266.9M429.5 256V267.0M443.5 256V263.5M453.5 256V265.6M456.5 256V263.0M484.5 256V263.6M502.5 256V261.3M508.5 256V264.4M531.5 256V262.8M541.5 256V267.0M542.5 256V263.5M544.5 256V264.7M550.5 256V266.8M556.5 256V267.8M572.5 256V262.3M604.5 256V266.5M607.5 256V266.9M608.5 256V263.0M613.5 256V261.1M620.5 256V265.4M625.5 256V268.0M626.5 256V265.2M628.5 256V262.1M637.5 256V261.9M649.5 256V266.9M663.5 256V266.3M668.5 256V261.1M677.5 256V267.4M684.5 256V263.1M687.5 256V261.4M698.5 256V263.7M704.5 256V266.7M726.5 256V268.0M731.5 256V267.6M743.5 256V264.9M749.5 256V261.8M761.5 256V267.2M772.5 256V267.6M788.5 256V266.1M812.5 256V267.8M821.5 256V267.3M833.5 256V265.7M840.5 256V264.4M843.5 256V263.0M849.5 256V266.8M850.5 256V266.2M860.5 256V262.5M874.5 256V262.2M885.5 256V264.8M890.5 256V261.4M901.5 256V265.4M923.5 256V266.4M925.5 256V265.0M933.5 256V267.5M936.5 256V262.0M940.5 256V264.3M941.5 256V262.4M944.5 256V265.2M947.5 256V263.2M953.5 256V263.6M976.5 256V262.3M981.5 256V264.6M994.5 256V267.1" stroke="#600060" stroke-width="1" fill="none"/><rect x="180" y="255.2" width="816" height="1.2" fill="#800080"/><rect x="180" y="264" width="816" height="1.2" fill="#000"/></svg>
<div class="a" style="left:126px;top:76.2px;width:28.6px;height:11.5px;border:1px solid #2a6cb3;border-radius:3px 0 0 3px;background:#fff"></div>
<div class="t" style="left:134.40px;top:77.18px;font-size:9.945px;color:#2a6cb3;font-weight:normal;transform:scaleX(0.9196);transform-origin:0 0;">10.0</div>
<div class="a" style="left:154.6px;top:76.2px;width:26.2px;height:11.5px;border:1px solid #8b2a97;background:#fff"></div>
<div class="t" style="left:161.40px;top:77.18px;font-size:9.945px;color:#8b2a97;font-weight:normal;transform:scaleX(0.9196);transform-origin:0 0;">16.0</div>
<div class="a" style="left:995.6px;top:76.2px;width:26.8px;height:11.5px;border:1px solid #e8163c;border-radius:0 3px 3px 0;background:#fff"></div>
<div class="t" style="left:998.20px;top:77.18px;font-size:9.945px;color:#e8163c;font-weight:normal;transform:scaleX(0.9196);transform-origin:0 0;">10.0</div>
<svg style="left:0;top:0" width="1024" height="576"><path d="M154.2 78.4 L159.4 82 L154.2 85.6 Z" fill="#2a6cb3"/><path d="M180.2 76.4 L186 82 L180.2 87.6 Z" fill="#800080"/><path d="M996 76.4 L989.8 82 L996 87.6 Z" fill="#e8163c"/></svg>
<div class="t" style="left:254.96px;top:303.28px;font-size:9.711px;color:#333333;font-weight:normal;transform:scaleX(0.9098);transform-origin:0 0;">0.2</div>
<div class="t" style="left:336.56px;top:303.28px;font-size:9.711px;color:#333333;font-weight:normal;transform:scaleX(0.9098);transform-origin:0 0;">0.4</div>
<div class="t" style="left:418.16px;top:303.28px;font-size:9.711px;color:#333333;font-weight:normal;transform:scaleX(0.9098);transform-origin:0 0;">0.6</div>
<div class="t" style="left:499.76px;top:303.28px;font-size:9.711px;color:#333333;font-weight:normal;transform:scaleX(0.9098);transform-origin:0 0;">0.8</div>
<div class="t" style="left:581.36px;top:303.28px;font-size:9.711px;color:#333333;font-weight:normal;transform:scaleX(0.9098);transform-origin:0 0;">1.0</div>
<div class="t" style="left:662.96px;top:303.28px;font-size:9.711px;color:#333333;font-weight:normal;transform:scaleX(0.9098);transform-origin:0 0;">1.2</div>
<div class="t" style="left:744.56px;top:303.28px;font-size:9.711px;color:#333333;font-weight:normal;transform:scaleX(0.9098);transform-origin:0 0;">1.4</div>
<div class="t" style="left:826.16px;top:303.28px;font-size:9.711px;color:#333333;font-weight:normal;transform:scaleX(0.9098);transform-origin:0 0;">1.6</div>
<div class="t" style="left:907.76px;top:303.28px;font-size:9.711px;color:#333333;font-weight:normal;transform:scaleX(0.9098);transform-origin:0 0;">1.8</div>
<div class="t" style="left:989.36px;top:303.28px;font-size:9.711px;color:#333333;font-weight:normal;transform:scaleX(0.9098);transform-origin:0 0;">2.0</div>
<div class="a" style="left:165px;top:299px;width:28.8px;height:16px;border:1px solid #2a6cb3;border-radius:3px;background:#fff"></div>
<div class="t" style="left:172.70px;top:303.28px;font-size:9.711px;color:#333333;font-weight:normal;transform:scaleX(0.9737);transform-origin:0 0;">0.0 s</div>
<svg style="left:0;top:0" width="1024" height="576"><path d="M175.4 299.2 L180.6 293.6 L185.8 299.2 Z" fill="#0d5496"/></svg>
<div class="t" style="left:180.30px;top:275.78px;font-size:10.062px;color:#8b2a97;font-weight:normal;transform:scaleX(0.8941);transform-origin:0 0;">A - B</div>
<div class="a" style="left:163.5px;top:298.6px;width:16.5px;height:1.0px;background:#8b2a97"></div>
<div class="t" style="left:139.73px;top:120.38px;font-size:10.296px;color:#2a6cb3;font-weight:normal;transform:scaleX(0.8852);transform-origin:0 0;">6.0</div>
<div class="t" style="left:162.06px;top:120.38px;font-size:10.296px;color:#8b2a97;font-weight:normal;transform:scaleX(0.8852);transform-origin:0 0;">12.0</div>
<div class="t" style="left:997.20px;top:120.38px;font-size:10.296px;color:#e8163c;font-weight:normal;transform:scaleX(0.8852);transform-origin:0 0;">6.0</div>
<div class="t" style="left:139.73px;top:142.13px;font-size:10.296px;color:#2a6cb3;font-weight:normal;transform:scaleX(0.8852);transform-origin:0 0;">4.0</div>
<div class="t" style="left:162.06px;top:142.13px;font-size:10.296px;color:#8b2a97;font-weight:normal;transform:scaleX(0.8852);transform-origin:0 0;">10.0</div>
<div class="t" style="left:997.20px;top:142.13px;font-size:10.296px;color:#e8163c;font-weight:normal;transform:scaleX(0.8852);transform-origin:0 0;">4.0</div>
<div class="t" style="left:139.73px;top:163.88px;font-size:10.296px;color:#2a6cb3;font-weight:normal;transform:scaleX(0.8852);transform-origin:0 0;">2.0</div>
<div class="t" style="left:167.13px;top:163.88px;font-size:10.296px;color:#8b2a97;font-weight:normal;transform:scaleX(0.8852);transform-origin:0 0;">8.0</div>
<div class="t" style="left:997.20px;top:163.88px;font-size:10.296px;color:#e8163c;font-weight:normal;transform:scaleX(0.8852);transform-origin:0 0;">2.0</div>
<div class="t" style="left:139.73px;top:185.63px;font-size:10.296px;color:#2a6cb3;font-weight:normal;transform:scaleX(0.8852);transform-origin:0 0;">0.0</div>
<div class="t" style="left:167.13px;top:185.63px;font-size:10.296px;color:#8b2a97;font-weight:normal;transform:scaleX(0.8852);transform-origin:0 0;">6.0</div>
<div class="t" style="left:997.20px;top:185.63px;font-size:10.296px;color:#e8163c;font-weight:normal;transform:scaleX(0.8852);transform-origin:0 0;">0.0</div>
<div class="t" style="left:136.69px;top:207.38px;font-size:10.296px;color:#2a6cb3;font-weight:normal;transform:scaleX(0.8852);transform-origin:0 0;">-2.0</div>
<div class="t" style="left:167.13px;top:207.38px;font-size:10.296px;color:#8b2a97;font-weight:normal;transform:scaleX(0.8852);transform-origin:0 0;">4.0</div>
<div class="t" style="left:997.20px;top:207.38px;font-size:10.296px;color:#e8163c;font-weight:normal;transform:scaleX(0.8852);transform-origin:0 0;">-2.0</div>
<div class="t" style="left:136.69px;top:229.13px;font-size:10.296px;color:#2a6cb3;font-weight:normal;transform:scaleX(0.8852);transform-origin:0 0;">-4.0</div>
<div class="t" style="left:167.13px;top:229.13px;font-size:10.296px;color:#8b2a97;font-weight:normal;transform:scaleX(0.8852);transform-origin:0 0;">2.0</div>
<div class="t" style="left:997.20px;top:229.13px;font-size:10.296px;color:#e8163c;font-weight:normal;transform:scaleX(0.8852);transform-origin:0 0;">-4.0</div>
<div class="t" style="left:136.69px;top:250.88px;font-size:10.296px;color:#2a6cb3;font-weight:normal;transform:scaleX(0.8852);transform-origin:0 0;">-6.0</div>
<div class="t" style="left:167.13px;top:250.88px;font-size:10.296px;color:#8b2a97;font-weight:normal;transform:scaleX(0.8852);transform-origin:0 0;">0.0</div>
<div class="t" style="left:997.20px;top:250.88px;font-size:10.296px;color:#e8163c;font-weight:normal;transform:scaleX(0.8852);transform-origin:0 0;">-6.0</div>
<div class="t" style="left:136.69px;top:272.63px;font-size:10.296px;color:#2a6cb3;font-weight:normal;transform:scaleX(0.8852);transform-origin:0 0;">-8.0</div>
<div class="t" style="left:164.09px;top:272.63px;font-size:10.296px;color:#8b2a97;font-weight:normal;transform:scaleX(0.8852);transform-origin:0 0;">-2.0</div>
<div class="t" style="left:997.20px;top:272.63px;font-size:10.296px;color:#e8163c;font-weight:normal;transform:scaleX(0.8852);transform-origin:0 0;">-8.0</div>
<div class="t" style="left:131.63px;top:294.38px;font-size:10.296px;color:#2a6cb3;font-weight:normal;transform:scaleX(0.8852);transform-origin:0 0;">-10.0</div>
<div class="t" style="left:164.09px;top:294.38px;font-size:10.296px;color:#8b2a97;font-weight:normal;transform:scaleX(0.8852);transform-origin:0 0;">-4.0</div>
<div class="t" style="left:997.20px;top:294.38px;font-size:10.296px;color:#e8163c;font-weight:normal;transform:scaleX(0.8852);transform-origin:0 0;">-10.0</div>
<div class="t" style="left:146.40px;top:90.78px;font-size:10.062px;color:#2a6cb3;font-weight:normal;transform:scaleX(0.8642);transform-origin:0 0;">V</div>
<div class="t" style="left:173.80px;top:90.78px;font-size:10.062px;color:#8b2a97;font-weight:normal;transform:scaleX(0.8344);transform-origin:0 0;">V</div>
<div class="t" style="left:997.20px;top:90.78px;font-size:10.062px;color:#e8163c;font-weight:normal;transform:scaleX(0.8642);transform-origin:0 0;">V</div>
<svg style="left:963.5px;top:92.5px" width="21" height="21" viewBox="0 0 21 21">
<circle cx="7.4" cy="7.4" r="5.4" fill="none" stroke="#0f5496" stroke-width="2.8"/>
<path d="M11.2 11.2 L18.4 18.4" stroke="#0f5496" stroke-width="3.4" stroke-linecap="butt"/>
<circle cx="7.4" cy="7.4" r="1.9" fill="#0f5496"/>
<path d="M7.4 5 V9.8 M5 7.4 H9.8" stroke="#fff" stroke-width="0.6"/>
</svg>
<div class="a" style="left:126px;top:315px;width:897px;height:6px;background:#f0f0f0"></div>
<div class="a" style="left:126px;top:321px;width:897px;height:254px;background:#fff"></div>
<svg style="left:0;top:0" width="1024" height="576">
<path d="M467 321 L475.2 336 H566.6 L574.8 321" fill="none" stroke="#a9cdea" stroke-width="1"/>
<path d="M575 321 L584.2 336.2 H672 L681.5 321" fill="none" stroke="#1a5c9c" stroke-width="1.6"/>
</svg>
<div class="t" style="left:488.00px;top:324.09px;font-size:10.881px;color:#2f5a86;font-weight:normal;transform:scaleX(0.8542);transform-origin:0 0;">Channel Labels</div>
<div class="t" style="left:557.28px;top:323.00px;font-size:11.7px;color:#2f5a86;font-weight:bold;transform:scaleX(0.8547);transform-origin:0 0;">×</div>
<div class="t" style="left:618.00px;top:324.09px;font-size:10.881px;color:#2f5a86;font-weight:normal;transform:scaleX(0.8734);transform-origin:0 0;">A - B</div>
<div class="t" style="left:664.48px;top:323.00px;font-size:11.7px;color:#2f5a86;font-weight:bold;transform:scaleX(0.8547);transform-origin:0 0;">×</div>
<div class="a" style="left:129.4px;top:338px;width:62.900000000000006px;height:17.5px;background:#fff;border:1px solid #a9cdea;border-radius:3px"></div>
<svg style="left:135.5px;top:340px" width="16" height="13" viewBox="0 0 16 13">
<path d="M7 2.5 H1 V12.2 H12 V8.5" fill="none" stroke="#0f5496" stroke-width="1.6"/>
<path d="M4.5 9.5 Q5.5 4.5 10.5 4.2 V1 L15.5 5.2 L10.5 9.4 V6.4 Q7 6.5 4.5 9.5 Z" fill="#0f5496"/></svg>
<div class="t" style="left:157.20px;top:342.09px;font-size:10.881px;color:#2f5a86;font-weight:normal;transform:scaleX(0.8585);transform-origin:0 0;">Export</div>
<div class="a" style="left:199px;top:338px;width:86.30000000000001px;height:17.5px;background:#fff;border:1px solid #a9cdea;border-radius:3px"></div>
<svg style="left:206.5px;top:340.5px" width="14" height="12" viewBox="0 0 14 12" fill="none" stroke="#0f5496" stroke-width="1.5">
<path d="M6.2 3.2 L8.2 1.2 Q9.6 -0.2 11.2 1.2 L12.4 2.4 Q13.8 4 12.4 5.4 L10.2 7.6"/>
<path d="M7.6 8.6 L5.6 10.6 Q4.2 12 2.6 10.6 L1.4 9.4 Q0 7.8 1.4 6.4 L3.6 4.2"/>
<path d="M4.8 7.4 L8.8 4.2"/></svg>
<div class="t" style="left:227.50px;top:342.09px;font-size:10.881px;color:#2f5a86;font-weight:normal;transform:scaleX(0.8842);transform-origin:0 0;">Data to text</div>
<div class="a" style="left:292px;top:338px;width:60.69999999999999px;height:17.5px;background:#fff;border:1px solid #a9cdea;border-radius:3px"></div>
<svg style="left:297px;top:340.5px" width="19.5" height="13" viewBox="0 0 19.5 13">
<rect x="0.7" y="0.7" width="18.1" height="11.6" fill="none" stroke="#0f5496" stroke-width="1.4"/>
<path d="M0.7 3.2 H18.8" stroke="#0f5496" stroke-width="1.6"/>
<path d="M5.2 0.7 V12.3 M9.75 0.7 V12.3 M14.3 0.7 V12.3" stroke="#0f5496" stroke-width="1.2"/>
<rect x="10.4" y="4" width="3.3" height="8" fill="#7aa6d0"/></svg>
<div class="t" style="left:320.00px;top:342.09px;font-size:10.881px;color:#2f5a86;font-weight:normal;transform:scaleX(0.8441);transform-origin:0 0;">Fields</div>
<div class="a" style="left:359.7px;top:338px;width:31.30000000000001px;height:17.5px;background:#fff;border:1px solid #a9cdea;border-radius:3px"></div>
<div class="a" style="left:393.3px;top:338px;width:31.19999999999999px;height:17.5px;background:#fff;border:1px solid #a9cdea;border-radius:3px"></div>
<div class="t" style="left:368.00px;top:339.24px;font-size:17.549999999999997px;color:#0f5496;font-weight:bold;transform:scaleX(0.9468);transform-origin:0 0;">A</div>
<svg style="left:0;top:0" width="1024" height="576"><path d="M378.4 343.8 L380.8 340.8 L383.2 343.8 Z" fill="#0f5496"/><path d="M412.3 340.6 L414.5 343.4 L416.7 340.6 Z" fill="#0f5496"/></svg>
<div class="t" style="left:402.75px;top:341.82px;font-size:14.625px;color:#0f5496;font-weight:bold;transform:scaleX(0.8995);transform-origin:0 0;">A</div>
<div class="a" style="left:432px;top:338px;width:133.5px;height:17.5px;background:#fff;border:1px solid #a9cdea;border-radius:3px;overflow:hidden"><div class="a" style="left:-1px;top:-1px;width:67.5px;height:17.5px;background:#0b5394"></div></div>
<div class="t" style="left:437.80px;top:342.09px;font-size:11.114999999999998px;color:#ffffff;font-weight:normal;transform:scaleX(0.9633);transform-origin:0 0;">All Buffers</div>
<div class="t" style="left:502.30px;top:342.09px;font-size:11.114999999999998px;color:#2f5a86;font-weight:normal;transform:scaleX(0.8848);transform-origin:0 0;">Current buffer</div>
<div class="a" style="left:626.6px;top:338px;width:77.10000000000002px;height:17.5px;background:#fff;border:1px solid #a9cdea;border-radius:3px"></div>
<svg style="left:635.5px;top:340px" width="12" height="14" viewBox="0 0 12 14"><path d="M0.6 0.6 H11.4 L7.2 6 V13.2 L4.8 11.6 V6 Z" fill="none" stroke="#0f5496" stroke-width="1.1"/></svg>
<div class="t" style="left:654.50px;top:342.09px;font-size:10.881px;color:#2f5a86;font-weight:normal;transform:scaleX(0.8698);transform-origin:0 0;">Add Filter</div>
<div class="t" style="left:710.20px;top:342.39px;font-size:10.881px;color:#444444;font-weight:normal;transform:scaleX(0.8133);transform-origin:0 0;">Search:</div>
<div class="a" style="left:745.4px;top:338px;width:99px;height:17.5px;background:#fff;border:1px solid #a9cdea;border-radius:3px"></div>
<div class="t" style="left:747.60px;top:342.29px;font-size:11.114999999999998px;color:#222f3e;font-weight:normal;transform:scaleX(0.9060);transform-origin:0 0;">All fields</div>
<svg style="left:0;top:0" width="1024" height="576"><path d="M833 343.8 H841 L837 349.8 Z" fill="#0f5496"/></svg>
<div class="a" style="left:849px;top:338px;width:101px;height:17.5px;background:#fff;border:1px solid #a9cdea"></div>
<div class="t" style="left:851.50px;top:342.39px;font-size:10.881px;color:#a0a0a0;font-weight:normal;transform:scaleX(0.8348);transform-origin:0 0;">[Enter value]</div>
<div class="a" style="left:954.5px;top:338px;width:31.0px;height:17.5px;background:#fff;border:1px solid #a9cdea;border-radius:3px"></div>
<div class="a" style="left:988.2px;top:338px;width:31.5px;height:17.5px;background:#fff;border:1px solid #a9cdea;border-radius:3px"></div>
<svg style="left:0;top:0" width="1024" height="576"><path d="M962.5 352 L970 342.3 L977.5 352" fill="none" stroke="#8a8a8a" stroke-width="1.9"/>
<path d="M996.4 341.8 L1004 351.6 L1011.6 341.8" fill="none" stroke="#8a8a8a" stroke-width="1.9"/></svg>
<div class="a" style="left:129px;top:360px;width:884.5px;height:1.1999999999999886px;background:#808080"></div>
<div class="a" style="left:129px;top:361px;width:884.5px;height:21px;background:#93bfe8"></div>
<div class="a" style="left:129px;top:381px;width:884.5px;height:1px;background:#9bb7d3"></div>
<div class="t" style="left:133.80px;top:366.98px;font-size:10.296px;color:#ffffff;font-weight:normal;transform:scaleX(0.9346);transform-origin:0 0;">Buffer Number</div>
<div class="t" style="left:219.60px;top:366.98px;font-size:10.296px;color:#ffffff;font-weight:normal;transform:scaleX(0.8578);transform-origin:0 0;">Packet</div>
<div class="t" style="left:270.60px;top:366.98px;font-size:10.296px;color:#ffffff;font-weight:normal;transform:scaleX(0.8931);transform-origin:0 0;">Start Time</div>
<div class="t" style="left:336.50px;top:366.98px;font-size:10.296px;color:#ffffff;font-weight:normal;transform:scaleX(0.8967);transform-origin:0 0;">End Time</div>
<div class="t" style="left:398.40px;top:366.98px;font-size:10.296px;color:#ffffff;font-weight:normal;transform:scaleX(0.9033);transform-origin:0 0;">ID</div>
<div class="t" style="left:431.70px;top:366.98px;font-size:10.296px;color:#ffffff;font-weight:normal;transform:scaleX(0.7390);transform-origin:0 0;">RTR</div>
<div class="t" style="left:470.70px;top:366.98px;font-size:10.296px;color:#ffffff;font-weight:normal;transform:scaleX(0.8044);transform-origin:0 0;">FDF</div>
<div class="t" style="left:510.00px;top:366.98px;font-size:10.296px;color:#ffffff;font-weight:normal;transform:scaleX(0.8253);transform-origin:0 0;">DLC</div>
<div class="t" style="left:550.40px;top:366.98px;font-size:10.296px;color:#ffffff;font-weight:normal;transform:scaleX(0.8736);transform-origin:0 0;">Data</div>
<div class="t" style="left:664.70px;top:366.98px;font-size:10.296px;color:#ffffff;font-weight:normal;transform:scaleX(0.7576);transform-origin:0 0;">CRC</div>
<div class="t" style="left:704.70px;top:366.98px;font-size:10.296px;color:#ffffff;font-weight:normal;transform:scaleX(0.8974);transform-origin:0 0;">ACK</div>
<div class="t" style="left:745.90px;top:366.98px;font-size:10.296px;color:#ffffff;font-weight:normal;transform:scaleX(0.8478);transform-origin:0 0;">CRC Valid</div>
<div class="t" style="left:809.20px;top:366.98px;font-size:10.296px;color:#ffffff;font-weight:normal;transform:scaleX(0.9451);transform-origin:0 0;">Bit Stuffing Valid</div>
<div class="t" style="left:902.50px;top:366.98px;font-size:10.296px;color:#ffffff;font-weight:normal;transform:scaleX(0.9263);transform-origin:0 0;">Valid</div>
<div class="t" style="left:946.20px;top:366.98px;font-size:10.296px;color:#ffffff;font-weight:normal;transform:scaleX(0.8040);transform-origin:0 0;">IDE</div>
<svg style="left:0;top:0" width="1024" height="576"><g fill="#fff"><path d="M200.79999999999998 370.6 L203.7 366.8 L206.6 370.6 Z M200.79999999999998 372.4 L203.7 376.2 L206.6 372.4 Z"/><path d="M251.79999999999998 370.6 L254.7 366.8 L257.6 370.6 Z M251.79999999999998 372.4 L254.7 376.2 L257.6 372.4 Z"/><path d="M317.2 370.6 L320.1 366.8 L323 370.6 Z M317.2 372.4 L320.1 376.2 L323 372.4 Z"/><path d="M380.2 370.6 L383.1 366.8 L386 370.6 Z M380.2 372.4 L383.1 376.2 L386 372.4 Z"/><path d="M411.2 370.6 L414.1 366.8 L417 370.6 Z M411.2 372.4 L414.1 376.2 L417 372.4 Z"/><path d="M451.2 370.6 L454.1 366.8 L457 370.6 Z M451.2 372.4 L454.1 376.2 L457 372.4 Z"/><path d="M491.2 370.6 L494.1 366.8 L497 370.6 Z M491.2 372.4 L494.1 376.2 L497 372.4 Z"/><path d="M531.2 370.6 L534.1 366.8 L537 370.6 Z M531.2 372.4 L534.1 376.2 L537 372.4 Z"/><path d="M645.8000000000001 370.6 L648.7 366.8 L651.6 370.6 Z M645.8000000000001 372.4 L648.7 376.2 L651.6 372.4 Z"/><path d="M686.2 370.6 L689.1 366.8 L692 370.6 Z M686.2 372.4 L689.1 376.2 L692 372.4 Z"/><path d="M727.2 370.6 L730.1 366.8 L733 370.6 Z M727.2 372.4 L730.1 376.2 L733 372.4 Z"/><path d="M790.2 370.6 L793.1 366.8 L796 370.6 Z M790.2 372.4 L793.1 376.2 L796 372.4 Z"/><path d="M883.2 370.6 L886.1 366.8 L889 370.6 Z M883.2 372.4 L886.1 376.2 L889 372.4 Z"/><path d="M927.2 370.6 L930.1 366.8 L933 370.6 Z M927.2 372.4 L930.1 376.2 L933 372.4 Z"/><path d="M964.2 370.6 L967.1 366.8 L970 370.6 Z M964.2 372.4 L967.1 376.2 L970 372.4 Z"/></g></svg>
<div class="a" style="left:129.4px;top:381.8px;width:884.0px;height:21.5px;background:#ffffff"></div>
<div class="t" style="left:199.29px;top:388.29px;font-size:10.646999999999998px;color:#333333;font-weight:normal;transform:scaleX(0.8120);transform-origin:0 0;">1</div>
<div class="t" style="left:250.59px;top:388.29px;font-size:10.646999999999998px;color:#333333;font-weight:normal;transform:scaleX(0.8120);transform-origin:0 0;">4</div>
<div class="t" style="left:284.84px;top:388.29px;font-size:10.646999999999998px;color:#333333;font-weight:normal;transform:scaleX(0.8462);transform-origin:0 0;">4.234 ms</div>
<div class="t" style="left:352.25px;top:388.29px;font-size:10.646999999999998px;color:#333333;font-weight:normal;transform:scaleX(0.8462);transform-origin:0 0;">4.47 ms</div>
<div class="t" style="left:396.90px;top:388.29px;font-size:10.646999999999998px;color:#333333;font-weight:normal;transform:scaleX(0.8291);transform-origin:0 0;">1 F0</div>
<div class="t" style="left:428.80px;top:388.29px;font-size:10.646999999999998px;color:#333333;font-weight:normal;transform:scaleX(0.8547);transform-origin:0 0;">0</div>
<div class="t" style="left:468.30px;top:388.29px;font-size:10.646999999999998px;color:#333333;font-weight:normal;transform:scaleX(0.8547);transform-origin:0 0;">0</div>
<div class="t" style="left:507.30px;top:388.29px;font-size:10.646999999999998px;color:#333333;font-weight:normal;transform:scaleX(0.8547);transform-origin:0 0;">8</div>
<div class="t" style="left:547.50px;top:388.29px;font-size:10.646999999999998px;color:#333333;font-weight:normal;transform:scaleX(0.8748);transform-origin:0 0;">09 60 09 00 09 00 09 00</div>
<div class="t" style="left:662.60px;top:388.29px;font-size:10.646999999999998px;color:#333333;font-weight:normal;transform:scaleX(0.8120);transform-origin:0 0;">13 08</div>
<div class="t" style="left:703.20px;top:388.29px;font-size:10.646999999999998px;color:#333333;font-weight:normal;transform:scaleX(0.8547);transform-origin:0 0;">0</div>
<div class="t" style="left:943.70px;top:388.29px;font-size:10.646999999999998px;color:#333333;font-weight:normal;transform:scaleX(0.8547);transform-origin:0 0;">0</div>
<div class="a" style="left:129.4px;top:403.3px;width:884.0px;height:21.5px;background:#ddebf8"></div>
<div class="t" style="left:199.29px;top:409.79px;font-size:10.646999999999998px;color:#333333;font-weight:normal;transform:scaleX(0.8120);transform-origin:0 0;">1</div>
<div class="t" style="left:250.59px;top:409.79px;font-size:10.646999999999998px;color:#333333;font-weight:normal;transform:scaleX(0.8120);transform-origin:0 0;">5</div>
<div class="t" style="left:284.84px;top:409.79px;font-size:10.646999999999998px;color:#333333;font-weight:normal;transform:scaleX(0.8462);transform-origin:0 0;">4.476 ms</div>
<div class="t" style="left:347.24px;top:409.79px;font-size:10.646999999999998px;color:#333333;font-weight:normal;transform:scaleX(0.8462);transform-origin:0 0;">4.716 ms</div>
<div class="t" style="left:396.90px;top:409.79px;font-size:10.646999999999998px;color:#333333;font-weight:normal;transform:scaleX(0.8291);transform-origin:0 0;">1 F3</div>
<div class="t" style="left:428.80px;top:409.79px;font-size:10.646999999999998px;color:#333333;font-weight:normal;transform:scaleX(0.8547);transform-origin:0 0;">0</div>
<div class="t" style="left:468.30px;top:409.79px;font-size:10.646999999999998px;color:#333333;font-weight:normal;transform:scaleX(0.8547);transform-origin:0 0;">0</div>
<div class="t" style="left:507.30px;top:409.79px;font-size:10.646999999999998px;color:#333333;font-weight:normal;transform:scaleX(0.8547);transform-origin:0 0;">8</div>
<div class="t" style="left:547.50px;top:409.79px;font-size:10.646999999999998px;color:#333333;font-weight:normal;transform:scaleX(0.8661);transform-origin:0 0;">00 80 00 FF 01 80 00 08</div>
<div class="t" style="left:662.60px;top:409.79px;font-size:10.646999999999998px;color:#333333;font-weight:normal;transform:scaleX(0.8120);transform-origin:0 0;">7C 94</div>
<div class="t" style="left:703.20px;top:409.79px;font-size:10.646999999999998px;color:#333333;font-weight:normal;transform:scaleX(0.8547);transform-origin:0 0;">0</div>
<div class="t" style="left:943.70px;top:409.79px;font-size:10.646999999999998px;color:#333333;font-weight:normal;transform:scaleX(0.8547);transform-origin:0 0;">0</div>
<div class="a" style="left:129.4px;top:424.8px;width:884.0px;height:21.5px;background:#0b5394"></div>
<div class="t" style="left:199.29px;top:431.29px;font-size:10.646999999999998px;color:#ffffff;font-weight:normal;transform:scaleX(0.8120);transform-origin:0 0;">1</div>
<div class="t" style="left:250.59px;top:431.29px;font-size:10.646999999999998px;color:#ffffff;font-weight:normal;transform:scaleX(0.8120);transform-origin:0 0;">6</div>
<div class="t" style="left:284.84px;top:431.29px;font-size:10.646999999999998px;color:#ffffff;font-weight:normal;transform:scaleX(0.8462);transform-origin:0 0;">8.506 ms</div>
<div class="t" style="left:347.24px;top:431.29px;font-size:10.646999999999998px;color:#ffffff;font-weight:normal;transform:scaleX(0.8462);transform-origin:0 0;">8.744 ms</div>
<div class="t" style="left:396.90px;top:431.29px;font-size:10.646999999999998px;color:#ffffff;font-weight:normal;transform:scaleX(0.8291);transform-origin:0 0;">3 16</div>
<div class="t" style="left:428.80px;top:431.29px;font-size:10.646999999999998px;color:#ffffff;font-weight:normal;transform:scaleX(0.8547);transform-origin:0 0;">0</div>
<div class="t" style="left:468.30px;top:431.29px;font-size:10.646999999999998px;color:#ffffff;font-weight:normal;transform:scaleX(0.8547);transform-origin:0 0;">0</div>
<div class="t" style="left:507.30px;top:431.29px;font-size:10.646999999999998px;color:#ffffff;font-weight:normal;transform:scaleX(0.8547);transform-origin:0 0;">8</div>
<div class="t" style="left:547.50px;top:431.29px;font-size:10.646999999999998px;color:#ffffff;font-weight:normal;transform:scaleX(0.8748);transform-origin:0 0;">05 40 00 00 00 14 00 00</div>
<div class="t" style="left:662.60px;top:431.29px;font-size:10.646999999999998px;color:#ffffff;font-weight:normal;transform:scaleX(0.8120);transform-origin:0 0;">43 EB</div>
<div class="t" style="left:703.20px;top:431.29px;font-size:10.646999999999998px;color:#ffffff;font-weight:normal;transform:scaleX(0.8547);transform-origin:0 0;">0</div>
<div class="t" style="left:943.70px;top:431.29px;font-size:10.646999999999998px;color:#ffffff;font-weight:normal;transform:scaleX(0.8547);transform-origin:0 0;">0</div>
<div class="a" style="left:129.4px;top:446.3px;width:884.0px;height:21.5px;background:#ddebf8"></div>
<div class="t" style="left:199.29px;top:452.79px;font-size:10.646999999999998px;color:#333333;font-weight:normal;transform:scaleX(0.8120);transform-origin:0 0;">1</div>
<div class="t" style="left:250.59px;top:452.79px;font-size:10.646999999999998px;color:#333333;font-weight:normal;transform:scaleX(0.8120);transform-origin:0 0;">7</div>
<div class="t" style="left:289.85px;top:452.79px;font-size:10.646999999999998px;color:#333333;font-weight:normal;transform:scaleX(0.8462);transform-origin:0 0;">8.75 ms</div>
<div class="t" style="left:347.24px;top:452.79px;font-size:10.646999999999998px;color:#333333;font-weight:normal;transform:scaleX(0.8462);transform-origin:0 0;">8.988 ms</div>
<div class="t" style="left:396.90px;top:452.79px;font-size:10.646999999999998px;color:#333333;font-weight:normal;transform:scaleX(0.8291);transform-origin:0 0;">1 F5</div>
<div class="t" style="left:428.80px;top:452.79px;font-size:10.646999999999998px;color:#333333;font-weight:normal;transform:scaleX(0.8547);transform-origin:0 0;">0</div>
<div class="t" style="left:468.30px;top:452.79px;font-size:10.646999999999998px;color:#333333;font-weight:normal;transform:scaleX(0.8547);transform-origin:0 0;">0</div>
<div class="t" style="left:507.30px;top:452.79px;font-size:10.646999999999998px;color:#333333;font-weight:normal;transform:scaleX(0.8547);transform-origin:0 0;">8</div>
<div class="t" style="left:547.50px;top:452.79px;font-size:10.646999999999998px;color:#333333;font-weight:normal;transform:scaleX(0.8704);transform-origin:0 0;">5F 00 00 00 80 21 00 00</div>
<div class="t" style="left:662.60px;top:452.79px;font-size:10.646999999999998px;color:#333333;font-weight:normal;transform:scaleX(0.8120);transform-origin:0 0;">08 E2</div>
<div class="t" style="left:703.20px;top:452.79px;font-size:10.646999999999998px;color:#333333;font-weight:normal;transform:scaleX(0.8547);transform-origin:0 0;">0</div>
<div class="t" style="left:943.70px;top:452.79px;font-size:10.646999999999998px;color:#333333;font-weight:normal;transform:scaleX(0.8547);transform-origin:0 0;">0</div>
<div class="a" style="left:129.4px;top:467.8px;width:884.0px;height:21.5px;background:#ffffff"></div>
<div class="t" style="left:199.29px;top:474.29px;font-size:10.646999999999998px;color:#333333;font-weight:normal;transform:scaleX(0.8120);transform-origin:0 0;">1</div>
<div class="t" style="left:250.59px;top:474.29px;font-size:10.646999999999998px;color:#333333;font-weight:normal;transform:scaleX(0.8120);transform-origin:0 0;">8</div>
<div class="t" style="left:284.84px;top:474.29px;font-size:10.646999999999998px;color:#333333;font-weight:normal;transform:scaleX(0.8462);transform-origin:0 0;">8.994 ms</div>
<div class="t" style="left:347.24px;top:474.29px;font-size:10.646999999999998px;color:#333333;font-weight:normal;transform:scaleX(0.8462);transform-origin:0 0;">9.225 ms</div>
<div class="t" style="left:396.90px;top:474.29px;font-size:10.646999999999998px;color:#333333;font-weight:normal;transform:scaleX(0.8291);transform-origin:0 0;">3 29</div>
<div class="t" style="left:428.80px;top:474.29px;font-size:10.646999999999998px;color:#333333;font-weight:normal;transform:scaleX(0.8547);transform-origin:0 0;">0</div>
<div class="t" style="left:468.30px;top:474.29px;font-size:10.646999999999998px;color:#333333;font-weight:normal;transform:scaleX(0.8547);transform-origin:0 0;">0</div>
<div class="t" style="left:507.30px;top:474.29px;font-size:10.646999999999998px;color:#333333;font-weight:normal;transform:scaleX(0.8547);transform-origin:0 0;">8</div>
<div class="t" style="left:547.50px;top:474.29px;font-size:10.646999999999998px;color:#333333;font-weight:normal;transform:scaleX(0.8616);transform-origin:0 0;">80 73 D5 09 00 00 00 00</div>
<div class="t" style="left:662.60px;top:474.29px;font-size:10.646999999999998px;color:#333333;font-weight:normal;transform:scaleX(0.8120);transform-origin:0 0;">6F 16</div>
<div class="t" style="left:703.20px;top:474.29px;font-size:10.646999999999998px;color:#333333;font-weight:normal;transform:scaleX(0.8547);transform-origin:0 0;">0</div>
<div class="t" style="left:943.70px;top:474.29px;font-size:10.646999999999998px;color:#333333;font-weight:normal;transform:scaleX(0.8547);transform-origin:0 0;">0</div>
<div class="a" style="left:129.4px;top:489.3px;width:884.0px;height:21.5px;background:#ddebf8"></div>
<div class="t" style="left:199.29px;top:495.79px;font-size:10.646999999999998px;color:#333333;font-weight:normal;transform:scaleX(0.8120);transform-origin:0 0;">1</div>
<div class="t" style="left:250.59px;top:495.79px;font-size:10.646999999999998px;color:#333333;font-weight:normal;transform:scaleX(0.8120);transform-origin:0 0;">9</div>
<div class="t" style="left:289.85px;top:495.79px;font-size:10.646999999999998px;color:#333333;font-weight:normal;transform:scaleX(0.8462);transform-origin:0 0;">9.23 ms</div>
<div class="t" style="left:347.24px;top:495.79px;font-size:10.646999999999998px;color:#333333;font-weight:normal;transform:scaleX(0.8462);transform-origin:0 0;">9.473 ms</div>
<div class="t" style="left:396.90px;top:495.79px;font-size:10.646999999999998px;color:#333333;font-weight:normal;transform:scaleX(0.8291);transform-origin:0 0;">5 45</div>
<div class="t" style="left:428.80px;top:495.79px;font-size:10.646999999999998px;color:#333333;font-weight:normal;transform:scaleX(0.8547);transform-origin:0 0;">0</div>
<div class="t" style="left:468.30px;top:495.79px;font-size:10.646999999999998px;color:#333333;font-weight:normal;transform:scaleX(0.8547);transform-origin:0 0;">0</div>
<div class="t" style="left:507.30px;top:495.79px;font-size:10.646999999999998px;color:#333333;font-weight:normal;transform:scaleX(0.8547);transform-origin:0 0;">8</div>
<div class="t" style="left:547.50px;top:495.79px;font-size:10.646999999999998px;color:#333333;font-weight:normal;transform:scaleX(0.8748);transform-origin:0 0;">02 00 00 00 00 01 00 00</div>
<div class="t" style="left:662.60px;top:495.79px;font-size:10.646999999999998px;color:#333333;font-weight:normal;transform:scaleX(0.8120);transform-origin:0 0;">15 F1</div>
<div class="t" style="left:703.20px;top:495.79px;font-size:10.646999999999998px;color:#333333;font-weight:normal;transform:scaleX(0.8547);transform-origin:0 0;">0</div>
<div class="t" style="left:943.70px;top:495.79px;font-size:10.646999999999998px;color:#333333;font-weight:normal;transform:scaleX(0.8547);transform-origin:0 0;">0</div>
<div class="a" style="left:129.4px;top:510.8px;width:884.0px;height:21.499999999999943px;background:#ffffff"></div>
<div class="t" style="left:199.29px;top:517.29px;font-size:10.646999999999998px;color:#333333;font-weight:normal;transform:scaleX(0.8120);transform-origin:0 0;">1</div>
<div class="t" style="left:245.78px;top:517.29px;font-size:10.646999999999998px;color:#333333;font-weight:normal;transform:scaleX(0.8120);transform-origin:0 0;">10</div>
<div class="t" style="left:285.51px;top:517.29px;font-size:10.646999999999998px;color:#333333;font-weight:normal;transform:scaleX(0.8462);transform-origin:0 0;">11.02 ms</div>
<div class="t" style="left:347.91px;top:517.29px;font-size:10.646999999999998px;color:#333333;font-weight:normal;transform:scaleX(0.8462);transform-origin:0 0;">11.25 ms</div>
<div class="t" style="left:396.90px;top:517.29px;font-size:10.646999999999998px;color:#333333;font-weight:normal;transform:scaleX(0.8291);transform-origin:0 0;">1 53</div>
<div class="t" style="left:428.80px;top:517.29px;font-size:10.646999999999998px;color:#333333;font-weight:normal;transform:scaleX(0.8547);transform-origin:0 0;">0</div>
<div class="t" style="left:468.30px;top:517.29px;font-size:10.646999999999998px;color:#333333;font-weight:normal;transform:scaleX(0.8547);transform-origin:0 0;">0</div>
<div class="t" style="left:507.30px;top:517.29px;font-size:10.646999999999998px;color:#333333;font-weight:normal;transform:scaleX(0.8547);transform-origin:0 0;">8</div>
<div class="t" style="left:547.50px;top:517.29px;font-size:10.646999999999998px;color:#333333;font-weight:normal;transform:scaleX(0.8408);transform-origin:0 0;">E4 49 00 FF 00 FF FF 82</div>
<div class="t" style="left:662.60px;top:517.29px;font-size:10.646999999999998px;color:#333333;font-weight:normal;transform:scaleX(0.8120);transform-origin:0 0;">4E A2</div>
<div class="t" style="left:703.20px;top:517.29px;font-size:10.646999999999998px;color:#333333;font-weight:normal;transform:scaleX(0.8547);transform-origin:0 0;">0</div>
<div class="t" style="left:943.70px;top:517.29px;font-size:10.646999999999998px;color:#333333;font-weight:normal;transform:scaleX(0.8547);transform-origin:0 0;">0</div>
<div class="a" style="left:129.4px;top:532.3px;width:884.0px;height:21.5px;background:#ddebf8"></div>
<div class="t" style="left:199.29px;top:538.79px;font-size:10.646999999999998px;color:#333333;font-weight:normal;transform:scaleX(0.8120);transform-origin:0 0;">1</div>
<div class="t" style="left:246.43px;top:538.79px;font-size:10.646999999999998px;color:#333333;font-weight:normal;transform:scaleX(0.8120);transform-origin:0 0;">11</div>
<div class="t" style="left:285.51px;top:538.79px;font-size:10.646999999999998px;color:#333333;font-weight:normal;transform:scaleX(0.8462);transform-origin:0 0;">11.25 ms</div>
<div class="t" style="left:347.91px;top:538.79px;font-size:10.646999999999998px;color:#333333;font-weight:normal;transform:scaleX(0.8462);transform-origin:0 0;">11.49 ms</div>
<div class="t" style="left:396.90px;top:538.79px;font-size:10.646999999999998px;color:#333333;font-weight:normal;transform:scaleX(0.8291);transform-origin:0 0;">1 F0</div>
<div class="t" style="left:428.80px;top:538.79px;font-size:10.646999999999998px;color:#333333;font-weight:normal;transform:scaleX(0.8547);transform-origin:0 0;">0</div>
<div class="t" style="left:468.30px;top:538.79px;font-size:10.646999999999998px;color:#333333;font-weight:normal;transform:scaleX(0.8547);transform-origin:0 0;">0</div>
<div class="t" style="left:507.30px;top:538.79px;font-size:10.646999999999998px;color:#333333;font-weight:normal;transform:scaleX(0.8547);transform-origin:0 0;">8</div>
<div class="t" style="left:547.50px;top:538.79px;font-size:10.646999999999998px;color:#333333;font-weight:normal;transform:scaleX(0.8748);transform-origin:0 0;">09 00 09 00 09 00 09 00</div>
<div class="t" style="left:662.60px;top:538.79px;font-size:10.646999999999998px;color:#333333;font-weight:normal;transform:scaleX(0.8120);transform-origin:0 0;">0C 22</div>
<div class="t" style="left:703.20px;top:538.79px;font-size:10.646999999999998px;color:#333333;font-weight:normal;transform:scaleX(0.8547);transform-origin:0 0;">0</div>
<div class="t" style="left:943.70px;top:538.79px;font-size:10.646999999999998px;color:#333333;font-weight:normal;transform:scaleX(0.8547);transform-origin:0 0;">0</div>
<div class="a" style="left:129.4px;top:553.8px;width:884.0px;height:21.5px;background:#ffffff"></div>
<div class="t" style="left:199.29px;top:560.29px;font-size:10.646999999999998px;color:#333333;font-weight:normal;transform:scaleX(0.8120);transform-origin:0 0;">1</div>
<div class="t" style="left:245.78px;top:560.29px;font-size:10.646999999999998px;color:#333333;font-weight:normal;transform:scaleX(0.8120);transform-origin:0 0;">12</div>
<div class="t" style="left:290.52px;top:560.29px;font-size:10.646999999999998px;color:#333333;font-weight:normal;transform:scaleX(0.8462);transform-origin:0 0;">11.5 ms</div>
<div class="t" style="left:347.91px;top:560.29px;font-size:10.646999999999998px;color:#333333;font-weight:normal;transform:scaleX(0.8462);transform-origin:0 0;">11.74 ms</div>
<div class="t" style="left:396.90px;top:560.29px;font-size:10.646999999999998px;color:#333333;font-weight:normal;transform:scaleX(0.8291);transform-origin:0 0;">1 F3</div>
<div class="t" style="left:428.80px;top:560.29px;font-size:10.646999999999998px;color:#333333;font-weight:normal;transform:scaleX(0.8547);transform-origin:0 0;">0</div>
<div class="t" style="left:468.30px;top:560.29px;font-size:10.646999999999998px;color:#333333;font-weight:normal;transform:scaleX(0.8547);transform-origin:0 0;">0</div>
<div class="t" style="left:507.30px;top:560.29px;font-size:10.646999999999998px;color:#333333;font-weight:normal;transform:scaleX(0.8547);transform-origin:0 0;">8</div>
<div class="t" style="left:547.50px;top:560.29px;font-size:10.646999999999998px;color:#333333;font-weight:normal;transform:scaleX(0.8661);transform-origin:0 0;">00 80 00 FF 01 80 00 08</div>
<div class="t" style="left:662.60px;top:560.29px;font-size:10.646999999999998px;color:#333333;font-weight:normal;transform:scaleX(0.8120);transform-origin:0 0;">7C 94</div>
<div class="t" style="left:703.20px;top:560.29px;font-size:10.646999999999998px;color:#333333;font-weight:normal;transform:scaleX(0.8547);transform-origin:0 0;">0</div>
<div class="t" style="left:943.70px;top:560.29px;font-size:10.646999999999998px;color:#333333;font-weight:normal;transform:scaleX(0.8547);transform-origin:0 0;">0</div>
<svg style="left:0;top:0" width="1024" height="576"><path d="M745.5999999999999 393.40000000000003 L748.5999999999999 396.2 L755.0 390.2" stroke="#3a3a3a" stroke-width="2.1" fill="none"/><path d="M810.5 393.40000000000003 L813.5 396.2 L819.9000000000001 390.2" stroke="#3a3a3a" stroke-width="2.1" fill="none"/><path d="M902.9 393.40000000000003 L905.9 396.2 L912.3000000000001 390.2" stroke="#3a3a3a" stroke-width="2.1" fill="none"/><path d="M745.5999999999999 414.90000000000003 L748.5999999999999 417.7 L755.0 411.7" stroke="#3a3a3a" stroke-width="2.1" fill="none"/><path d="M810.5 414.90000000000003 L813.5 417.7 L819.9000000000001 411.7" stroke="#3a3a3a" stroke-width="2.1" fill="none"/><path d="M902.9 414.90000000000003 L905.9 417.7 L912.3000000000001 411.7" stroke="#3a3a3a" stroke-width="2.1" fill="none"/><path d="M745.5999999999999 436.40000000000003 L748.5999999999999 439.2 L755.0 433.2" stroke="#ffffff" stroke-width="2.1" fill="none"/><path d="M810.5 436.40000000000003 L813.5 439.2 L819.9000000000001 433.2" stroke="#ffffff" stroke-width="2.1" fill="none"/><path d="M902.9 436.40000000000003 L905.9 439.2 L912.3000000000001 433.2" stroke="#ffffff" stroke-width="2.1" fill="none"/><path d="M745.5999999999999 457.90000000000003 L748.5999999999999 460.7 L755.0 454.7" stroke="#3a3a3a" stroke-width="2.1" fill="none"/><path d="M810.5 457.90000000000003 L813.5 460.7 L819.9000000000001 454.7" stroke="#3a3a3a" stroke-width="2.1" fill="none"/><path d="M902.9 457.90000000000003 L905.9 460.7 L912.3000000000001 454.7" stroke="#3a3a3a" stroke-width="2.1" fill="none"/><path d="M745.5999999999999 479.40000000000003 L748.5999999999999 482.2 L755.0 476.2" stroke="#3a3a3a" stroke-width="2.1" fill="none"/><path d="M810.5 479.40000000000003 L813.5 482.2 L819.9000000000001 476.2" stroke="#3a3a3a" stroke-width="2.1" fill="none"/><path d="M902.9 479.40000000000003 L905.9 482.2 L912.3000000000001 476.2" stroke="#3a3a3a" stroke-width="2.1" fill="none"/><path d="M745.5999999999999 500.90000000000003 L748.5999999999999 503.7 L755.0 497.7" stroke="#3a3a3a" stroke-width="2.1" fill="none"/><path d="M810.5 500.90000000000003 L813.5 503.7 L819.9000000000001 497.7" stroke="#3a3a3a" stroke-width="2.1" fill="none"/><path d="M902.9 500.90000000000003 L905.9 503.7 L912.3000000000001 497.7" stroke="#3a3a3a" stroke-width="2.1" fill="none"/><path d="M745.5999999999999 522.4 L748.5999999999999 525.2 L755.0 519.2" stroke="#3a3a3a" stroke-width="2.1" fill="none"/><path d="M810.5 522.4 L813.5 525.2 L819.9000000000001 519.2" stroke="#3a3a3a" stroke-width="2.1" fill="none"/><path d="M902.9 522.4 L905.9 525.2 L912.3000000000001 519.2" stroke="#3a3a3a" stroke-width="2.1" fill="none"/><path d="M745.5999999999999 543.9 L748.5999999999999 546.6999999999999 L755.0 540.6999999999999" stroke="#3a3a3a" stroke-width="2.1" fill="none"/><path d="M810.5 543.9 L813.5 546.6999999999999 L819.9000000000001 540.6999999999999" stroke="#3a3a3a" stroke-width="2.1" fill="none"/><path d="M902.9 543.9 L905.9 546.6999999999999 L912.3000000000001 540.6999999999999" stroke="#3a3a3a" stroke-width="2.1" fill="none"/><path d="M745.5999999999999 565.4 L748.5999999999999 568.1999999999999 L755.0 562.1999999999999" stroke="#3a3a3a" stroke-width="2.1" fill="none"/><path d="M810.5 565.4 L813.5 568.1999999999999 L819.9000000000001 562.1999999999999" stroke="#3a3a3a" stroke-width="2.1" fill="none"/><path d="M902.9 565.4 L905.9 568.1999999999999 L912.3000000000001 562.1999999999999" stroke="#3a3a3a" stroke-width="2.1" fill="none"/><path d="M129.4 403.5H1013.4M129.4 424.5H1013.4M129.4 446.5H1013.4M129.4 467.5H1013.4M129.4 489.5H1013.4M129.4 510.5H1013.4M129.4 532.5H1013.4M129.4 553.5H1013.4" stroke="#a6a6a6" stroke-width="1" fill="none"/><g stroke="#a6a6a6" stroke-width="1"><path d="M129.5 361 V575"/><path d="M211.5 361 V575"/><path d="M261.5 361 V575"/><path d="M327.5 361 V575"/><path d="M390.5 361 V575"/><path d="M422.5 361 V575"/><path d="M462.5 361 V575"/><path d="M501.5 361 V575"/><path d="M541.5 361 V575"/><path d="M656.5 361 V575"/><path d="M697.5 361 V575"/><path d="M737.5 361 V575"/><path d="M801.5 361 V575"/><path d="M894.5 361 V575"/><path d="M938.5 361 V575"/><path d="M975.5 361 V575"/></g></svg>
<div class="a" style="left:1013.4px;top:382px;width:9.600000000000023px;height:193px;background:#fff"></div>
<div class="a" style="left:1014px;top:382px;width:6px;height:193px;background:#d9dde4"></div>
<div class="a" style="left:1014.3px;top:383px;width:5.300000000000068px;height:5.399999999999977px;background:#0b5394"></div>
<div class="a" style="left:0px;top:24px;width:1px;height:552px;background:#2a78bc"></div>
<div class="a" style="left:1023px;top:24px;width:1px;height:552px;background:#2a78bc"></div>
<div class="a" style="left:0px;top:575px;width:1024px;height:1px;background:#2a78bc"></div>
</body></html>
